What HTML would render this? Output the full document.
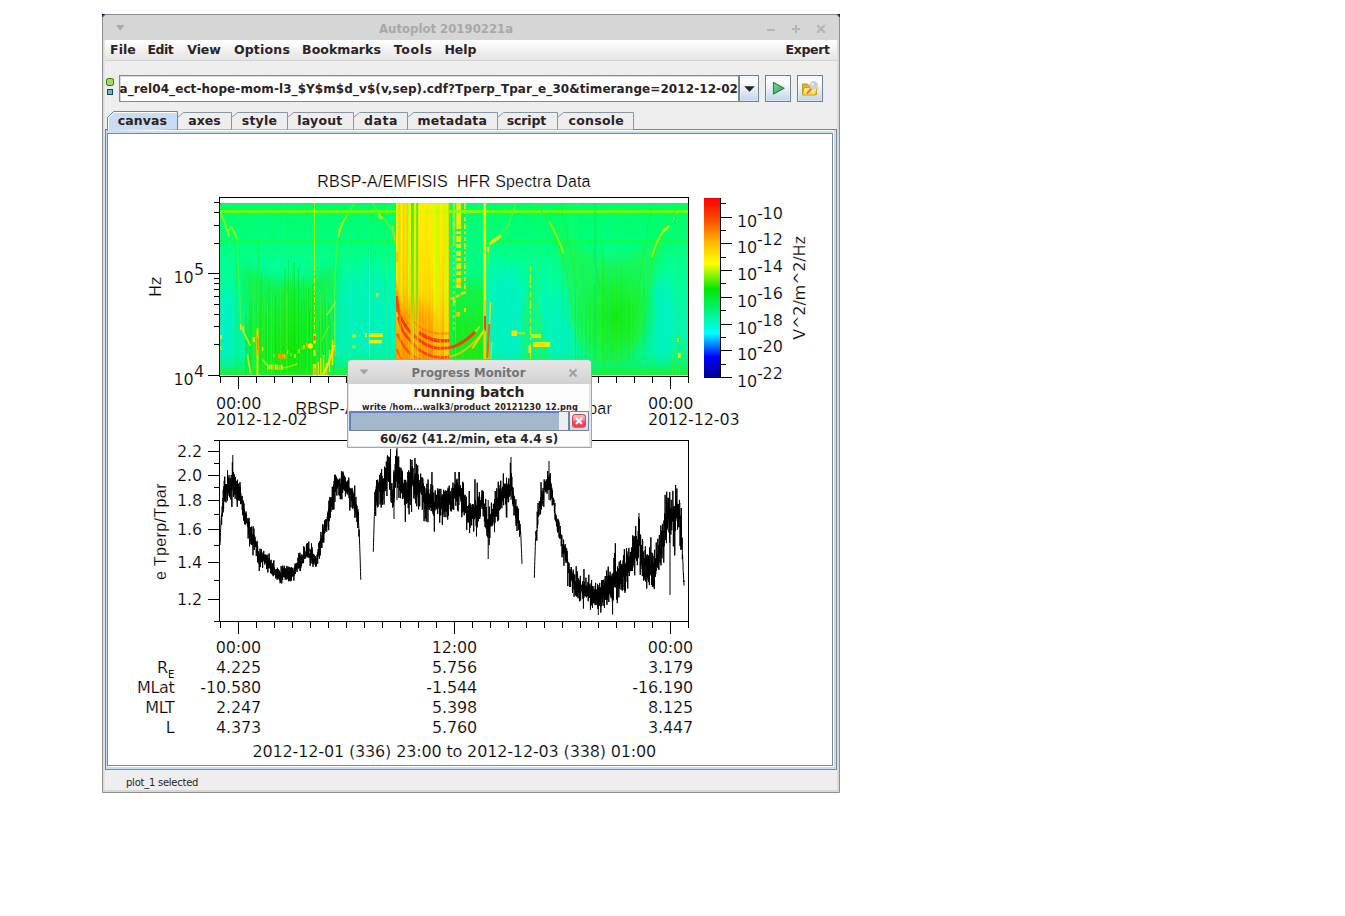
<!DOCTYPE html>
<html>
<head>
<meta charset="utf-8">
<title>Autoplot 20190221a</title>
<style>

html,body{margin:0;padding:0;background:#fff;}
body{width:1345px;height:916px;position:relative;overflow:hidden;font-family:"DejaVu Sans","Liberation Sans",sans-serif;}
.abs{position:absolute;}
.ui{position:absolute;font-weight:bold;font-size:12.5px;line-height:14px;color:#2b2226;white-space:nowrap;letter-spacing:0.15px;}
.btn{position:absolute;top:75px;height:27px;box-sizing:border-box;border:1px solid #6f8294;background:linear-gradient(#eef3f9,#ffffff 22%,#e4ecf5 55%,#c2d5ea);box-shadow:inset 0 0 0 1px rgba(255,255,255,0.3);}

</style>
</head>
<body>

<!-- window frame -->
<div class="abs" style="left:102px;top:14px;width:738px;height:779px;box-sizing:border-box;border:1px solid #8e8e8e;border-radius:5px 5px 0 0;background:#d6d6d6"></div>
<div class="abs" style="left:102px;top:14px;width:3px;height:3px;background:#0c1c3c;border-radius:0"></div>
<div class="abs" style="left:837px;top:14px;width:3px;height:3px;background:#0c1c3c"></div>
<div class="abs" style="left:102px;top:14px;width:738px;height:26px;box-sizing:border-box;border:1px solid #8e8e8e;border-bottom:none;border-radius:5px 5px 0 0;background:#d6d6d6"></div>
<svg class="abs" style="left:112px;top:20px" width="20" height="16"><path d="M4 5h8.500l-4.250 5.800z" fill="#ababab"/></svg>
<div class="abs" style="left:379px;top:21px;width:134px;text-align:center;font-family:'DejaVu Sans Condensed','DejaVu Sans',sans-serif;font-weight:bold;font-size:13px;line-height:16px;color:#a8a8a8;white-space:nowrap">Autoplot 20190221a</div>
<svg class="abs" style="left:760px;top:18px" width="76" height="20" stroke="#b6b6b6" stroke-width="2" fill="none"><path d="M7 12h8"/><path d="M32 11h8M36 7v8"/><path d="M57.200 7.200l7.600 7.600M64.800 7.200l-7.600 7.600" stroke-width="2.200"/></svg>
<!-- content bg -->
<div class="abs" style="left:105px;top:40px;width:732px;height:751px;background:#eeeeee"></div>
<div class="abs" style="left:103px;top:40px;width:2px;height:751px;background:linear-gradient(90deg,#d8d8d8,#e8e8e8)"></div>
<div class="abs" style="left:837px;top:40px;width:2px;height:751px;background:linear-gradient(90deg,#e0e0e0,#d4d4d4)"></div>
<div class="abs" style="left:103px;top:790px;width:736px;height:2px;background:#d8d8d8"></div>
<!-- menubar -->
<div class="abs" style="left:105px;top:40px;width:732px;height:20px;background:linear-gradient(#ffffff,#f6f6f6 35%,#e4e4e4)"></div>
<div class="abs" style="left:105px;top:60px;width:732px;height:1px;background:#d2d2d2"></div>
<span class="ui" style="left:110.1px;top:43px;letter-spacing:0.03px">File</span>
<span class="ui" style="left:147.6px;top:43px;letter-spacing:-0.57px">Edit</span>
<span class="ui" style="left:187.3px;top:43px;letter-spacing:-0.1px">View</span>
<span class="ui" style="left:233.9px;top:43px;letter-spacing:0.2px">Options</span>
<span class="ui" style="left:302.1px;top:43px;letter-spacing:0.05px">Bookmarks</span>
<span class="ui" style="left:393.8px;top:43px;letter-spacing:0.62px">Tools</span>
<span class="ui" style="left:444.4px;top:43px;letter-spacing:-0.07px">Help</span>
<span class="ui" style="left:785.6px;top:43px;letter-spacing:-0.34px">Expert</span>
<!-- url bar -->
<div class="abs" style="left:106px;top:78px;width:8.300px;height:8.300px;box-sizing:border-box;border:1.700px solid #3f7400;border-radius:2.200px;background:#a5d86c"></div>
<div class="abs" style="left:107px;top:88.800px;width:6.200px;height:6.200px;box-sizing:border-box;border:1px solid #0a4a6c;background:#7ab0d0"></div>
<div class="abs" style="left:119px;top:75px;width:620px;height:27px;box-sizing:border-box;border:1px solid #7a8a99;background:#fff;overflow:hidden;box-shadow:inset 1px 1px 0 #d4dae0"><span class="ui" style="right:0px;top:6px;font-size:12px;letter-spacing:0.08px">a_rel04_ect-hope-mom-l3_$Y$m$d_v$(v,sep).cdf?Tperp_Tpar_e_30&amp;timerange=2012-12-02</span></div>
<div class="btn" style="left:739px;width:20px"><svg width="18" height="25" style="display:block"><path d="M4.200 10.200h10.600l-5.300 5.600z" fill="#262626"/></svg></div>
<div class="btn" style="left:765px;width:26px"><svg width="24" height="25" style="display:block"><defs><linearGradient id="gpl" x1="0" y1="0" x2="1" y2="1"><stop offset="0" stop-color="#8fd69a"/><stop offset="1" stop-color="#2f9e55"/></linearGradient></defs><path d="M7.500 6.500v11.500l10.500-5.750z" fill="url(#gpl)" stroke="#1f8a4a" stroke-width="1.200" stroke-linejoin="round"/></svg></div>
<div class="btn" style="left:797px;width:26px"><svg width="24" height="25" style="display:block"><defs><linearGradient id="gfo" x1="0" y1="0" x2="0" y2="1"><stop offset="0" stop-color="#fff6b8"/><stop offset="1" stop-color="#ffd24a"/></linearGradient></defs><path d="M4.500 18.500v-10.500h5l1.500 1.500h7.500v9z" fill="#e0b030" stroke="#c89a18"/><path d="M4.500 19l1.800-7.500h13l-1.800 7.500z" fill="url(#gfo)" stroke="#d0a020"/><path d="M13.500 12.500l-4 4.500" stroke="#f07c1c" stroke-width="2" stroke-linecap="round"/><circle cx="15.700" cy="9.200" r="3.600" fill="#b4d6f8" stroke="#e6ccb8" stroke-width="1.200"/><circle cx="14.800" cy="8.300" r="1.300" fill="#e4f1fd"/></svg></div>
<!-- tab pane -->
<div class="abs" style="left:105px;top:129px;width:732px;height:641px;box-sizing:border-box;background:#c8ddf2;border:1px solid #7a8a99;border-top-color:#6382bf;border-left-color:#6382bf"></div>
<div class="abs" style="left:107px;top:130px;width:727px;height:1px;background:#fff"></div>
<div class="abs" style="left:833px;top:130px;width:1px;height:637px;background:#fff"></div>
<div class="abs" style="left:108px;top:766px;width:726px;height:1px;background:#fff"></div>
<div class="abs" style="left:107px;top:133px;width:726px;height:633px;box-sizing:border-box;background:#fff;border:1px solid #7a8a99"></div>
<svg class="abs" style="left:0;top:0" width="1345" height="140"><path d="M177.5 129.500V117.500L183.5 112.500H231.5V129.500" fill="#eeeeee" stroke="#8a95a3" stroke-width="1"/><path d="M231.5 129.500V117.500L237.5 112.500H287.5V129.500" fill="#eeeeee" stroke="#8a95a3" stroke-width="1"/><path d="M287.5 129.500V117.500L293.5 112.500H353.5V129.500" fill="#eeeeee" stroke="#8a95a3" stroke-width="1"/><path d="M353.5 129.500V117.500L359.5 112.500H407.5V129.500" fill="#eeeeee" stroke="#8a95a3" stroke-width="1"/><path d="M407.5 129.500V117.500L413.5 112.500H497.5V129.500" fill="#eeeeee" stroke="#8a95a3" stroke-width="1"/><path d="M497.5 129.500V117.500L503.5 112.500H557.5V129.500" fill="#eeeeee" stroke="#8a95a3" stroke-width="1"/><path d="M557.5 129.500V117.500L563.5 112.500H633.5V129.500" fill="#eeeeee" stroke="#8a95a3" stroke-width="1"/><path d="M107.5 131V117.500L113.5 111.500H177.5V129.500" fill="#c8ddf2" stroke="#6382bf" stroke-width="1"/><path d="M108.5 131V118L114 112.500H176.5" fill="none" stroke="#ffffff" stroke-width="1"/></svg>
<div class="ui" style="left:117.8px;top:114px;letter-spacing:0.1px">canvas</div>
<div class="ui" style="left:188.2px;top:114px;letter-spacing:0.07px">axes</div>
<div class="ui" style="left:241.7px;top:114px;letter-spacing:0.25px">style</div>
<div class="ui" style="left:297.3px;top:114px;letter-spacing:0.2px">layout</div>
<div class="ui" style="left:364px;top:114px;letter-spacing:0.53px">data</div>
<div class="ui" style="left:417.5px;top:114px;letter-spacing:0.26px">metadata</div>
<div class="ui" style="left:506.7px;top:114px;letter-spacing:-0.14px">script</div>
<div class="ui" style="left:568.6px;top:114px;letter-spacing:0.25px">console</div>
<!-- status -->
<div class="abs" style="left:126px;top:776px;font-size:10px;line-height:14px;color:#2b2226;white-space:nowrap;letter-spacing:-0.25px">plot_1 selected</div>

<svg class="abs" style="left:0;top:0" width="1345" height="916">
<defs>
<clipPath id="cs"><rect x="220" y="203" width="468" height="172"/></clipPath>
<clipPath id="cb"><rect x="396" y="203" width="90.500" height="172"/></clipPath>
<clipPath id="cbl"><rect x="396" y="203" width="53.300" height="172"/></clipPath>
<clipPath id="cbr"><rect x="449.300" y="203" width="37" height="172"/></clipPath>
<linearGradient id="gbase" x1="0" y1="203" x2="0" y2="375" gradientUnits="userSpaceOnUse"><stop offset="0" stop-color="#00ff62"/><stop offset="0.2" stop-color="#00ff7c"/><stop offset="0.35" stop-color="#00ff94"/><stop offset="0.55" stop-color="#00fca8"/><stop offset="0.75" stop-color="#00f8b2"/><stop offset="0.88" stop-color="#00f6ac"/><stop offset="0.94" stop-color="#08f484"/><stop offset="1" stop-color="#10f060"/></linearGradient>
<linearGradient id="gY" x1="0" y1="203" x2="0" y2="375" gradientUnits="userSpaceOnUse"><stop offset="0" stop-color="#f6f000"/><stop offset="0.25" stop-color="#ffe800"/><stop offset="0.5" stop-color="#ffd800"/><stop offset="0.7" stop-color="#ffbc00"/><stop offset="0.9" stop-color="#ff9c00"/><stop offset="1" stop-color="#ff9000"/></linearGradient>
<linearGradient id="gO" x1="0" y1="203" x2="0" y2="375" gradientUnits="userSpaceOnUse"><stop offset="0" stop-color="#ffd400"/><stop offset="0.4" stop-color="#ffc400"/><stop offset="0.65" stop-color="#ffa000"/><stop offset="0.9" stop-color="#ff7800"/><stop offset="1" stop-color="#ff7000"/></linearGradient>
<linearGradient id="gYG" x1="0" y1="203" x2="0" y2="375" gradientUnits="userSpaceOnUse"><stop offset="0" stop-color="#c4ff00"/><stop offset="0.5" stop-color="#d8f800"/><stop offset="0.75" stop-color="#f4d800"/><stop offset="1" stop-color="#ffb000"/></linearGradient>
<linearGradient id="gG" x1="0" y1="203" x2="0" y2="375" gradientUnits="userSpaceOnUse"><stop offset="0" stop-color="#38f000"/><stop offset="0.5" stop-color="#58f000"/><stop offset="0.75" stop-color="#c0e800"/><stop offset="1" stop-color="#f0c000"/></linearGradient>
<linearGradient id="gGR" x1="0" y1="203" x2="0" y2="375" gradientUnits="userSpaceOnUse"><stop offset="0" stop-color="#00ff74"/><stop offset="0.4" stop-color="#00fc84"/><stop offset="0.52" stop-color="#10f448"/><stop offset="0.75" stop-color="#18ec20"/><stop offset="1" stop-color="#20e810"/></linearGradient>
<radialGradient id="rgU1" cx="0.5" cy="0.62" r="0.62"><stop offset="0" stop-color="#10e404" stop-opacity="0.95"/><stop offset="0.55" stop-color="#18ec14" stop-opacity="0.7"/><stop offset="1" stop-color="#10f020" stop-opacity="0"/></radialGradient>
<radialGradient id="rgU2" cx="0.5" cy="0.5" r="0.5"><stop offset="0" stop-color="#14ea0c" stop-opacity="0.95"/><stop offset="0.5" stop-color="#1cf020" stop-opacity="0.7"/><stop offset="1" stop-color="#10f440" stop-opacity="0"/></radialGradient>
<filter id="b5" x="-30%" y="-30%" width="160%" height="160%"><feGaussianBlur stdDeviation="6"/></filter>
<filter id="b3" x="-30%" y="-30%" width="160%" height="160%"><feGaussianBlur stdDeviation="3"/></filter>
<filter id="b1" x="-30%" y="-30%" width="160%" height="160%"><feGaussianBlur stdDeviation="0.7"/></filter>
</defs>
<g clip-path="url(#cs)">
<rect x="220" y="203" width="468" height="172" fill="url(#gbase)"/>
<ellipse cx="228" cy="330" rx="12" ry="40" fill="#00f0cc" opacity="0.7" filter="url(#b5)"/>
<ellipse cx="345" cy="320" rx="9" ry="48" fill="#00f0cc" opacity="0.6" filter="url(#b5)"/>
<ellipse cx="366" cy="310" rx="24" ry="44" fill="#00f0cc" opacity="0.45" filter="url(#b5)"/>
<ellipse cx="388" cy="320" rx="8" ry="48" fill="#00f0cc" opacity="0.55" filter="url(#b5)"/>
<ellipse cx="508" cy="318" rx="20" ry="52" fill="#00f0cc" opacity="0.7" filter="url(#b5)"/>
<ellipse cx="545" cy="325" rx="10" ry="40" fill="#00f0cc" opacity="0.3" filter="url(#b5)"/>
<ellipse cx="561" cy="332" rx="10" ry="40" fill="#00f0cc" opacity="0.55" filter="url(#b5)"/>
<ellipse cx="662" cy="322" rx="12" ry="45" fill="#00f0cc" opacity="0.6" filter="url(#b5)"/>
<ellipse cx="495" cy="290" rx="8" ry="40" fill="#00f0cc" opacity="0.35" filter="url(#b5)"/>
<ellipse cx="655" cy="300" rx="6" ry="30" fill="#00f0cc" opacity="0.3" filter="url(#b5)"/>
<path d="M241 262 L243 330 Q248 374 290 378 Q330 374 335 318 L337 262 Q290 300 241 262Z" fill="#18f038" opacity="0.75" filter="url(#b5)"/>
<ellipse cx="289" cy="338" rx="44" ry="58" fill="url(#rgU1)"/>
<path d="M548 215 Q566 260 572 310 Q580 356 605 364 Q634 358 646 310 Q654 262 672 222 Q610 300 548 215Z" fill="#20f440" opacity="0.7" filter="url(#b5)"/>
<ellipse cx="616" cy="318" rx="44" ry="58" fill="url(#rgU2)"/>
<rect x="220" y="203" width="1" height="172" fill="#00ff40" opacity="0.1"/>
<rect x="222" y="203" width="1" height="172" fill="#00ffb0" opacity="0.05"/>
<rect x="223" y="203" width="1" height="172" fill="#00f0d0" opacity="0.1"/>
<rect x="225" y="258" width="1" height="117" fill="#00ffb0" opacity="0.06"/>
<rect x="231" y="248" width="1" height="127" fill="#00ff40" opacity="0.08"/>
<rect x="232" y="203" width="1" height="172" fill="#40ff40" opacity="0.12"/>
<rect x="233" y="203" width="1" height="172" fill="#00ffb0" opacity="0.13"/>
<rect x="235" y="293" width="1" height="82" fill="#20f020" opacity="0.13"/>
<rect x="241" y="203" width="1" height="172" fill="#00ff40" opacity="0.14"/>
<rect x="246" y="203" width="1" height="172" fill="#20f020" opacity="0.06"/>
<rect x="248" y="203" width="1" height="172" fill="#00f0d0" opacity="0.1"/>
<rect x="252" y="203" width="1" height="172" fill="#40ff40" opacity="0.12"/>
<rect x="253" y="290" width="1" height="85" fill="#20f020" opacity="0.17"/>
<rect x="255" y="203" width="1" height="172" fill="#40ff40" opacity="0.13"/>
<rect x="256" y="203" width="1" height="172" fill="#00f0d0" opacity="0.16"/>
<rect x="261" y="203" width="1" height="172" fill="#40ff40" opacity="0.06"/>
<rect x="264" y="203" width="1" height="172" fill="#00f0d0" opacity="0.1"/>
<rect x="267" y="203" width="1" height="172" fill="#00f0d0" opacity="0.18"/>
<rect x="269" y="203" width="1" height="172" fill="#00ff40" opacity="0.06"/>
<rect x="270" y="203" width="1" height="172" fill="#00ffb0" opacity="0.07"/>
<rect x="271" y="203" width="1" height="172" fill="#00ffb0" opacity="0.09"/>
<rect x="277" y="203" width="1" height="172" fill="#00ffb0" opacity="0.09"/>
<rect x="278" y="203" width="1" height="172" fill="#00f0d0" opacity="0.05"/>
<rect x="280" y="230" width="1" height="145" fill="#00ffb0" opacity="0.05"/>
<rect x="281" y="203" width="1" height="172" fill="#20f020" opacity="0.17"/>
<rect x="282" y="249" width="1" height="126" fill="#00ff40" opacity="0.13"/>
<rect x="283" y="203" width="1" height="172" fill="#40ff40" opacity="0.12"/>
<rect x="284" y="203" width="1" height="172" fill="#00f0d0" opacity="0.18"/>
<rect x="286" y="203" width="1" height="172" fill="#20f020" opacity="0.14"/>
<rect x="288" y="203" width="1" height="172" fill="#20f020" opacity="0.07"/>
<rect x="289" y="203" width="1" height="172" fill="#00ffb0" opacity="0.17"/>
<rect x="293" y="203" width="1" height="172" fill="#40ff40" opacity="0.17"/>
<rect x="296" y="203" width="1" height="172" fill="#00ff40" opacity="0.13"/>
<rect x="299" y="203" width="1" height="172" fill="#00ffb0" opacity="0.11"/>
<rect x="302" y="287" width="1" height="88" fill="#00ffb0" opacity="0.17"/>
<rect x="306" y="203" width="1" height="172" fill="#00ff40" opacity="0.11"/>
<rect x="310" y="240" width="1" height="135" fill="#40ff40" opacity="0.15"/>
<rect x="311" y="203" width="1" height="172" fill="#00f0d0" opacity="0.15"/>
<rect x="315" y="240" width="1" height="135" fill="#00f0d0" opacity="0.1"/>
<rect x="316" y="203" width="1" height="172" fill="#00ff40" opacity="0.04"/>
<rect x="318" y="203" width="1" height="172" fill="#00ffb0" opacity="0.18"/>
<rect x="319" y="231" width="1" height="144" fill="#00ffb0" opacity="0.06"/>
<rect x="326" y="203" width="1" height="172" fill="#40ff40" opacity="0.07"/>
<rect x="328" y="203" width="1" height="172" fill="#00ffb0" opacity="0.1"/>
<rect x="339" y="203" width="1" height="172" fill="#00f0d0" opacity="0.15"/>
<rect x="341" y="245" width="1" height="130" fill="#00ff40" opacity="0.11"/>
<rect x="342" y="203" width="1" height="172" fill="#00ffb0" opacity="0.11"/>
<rect x="344" y="242" width="1" height="133" fill="#00ff40" opacity="0.08"/>
<rect x="346" y="308" width="1" height="67" fill="#20f020" opacity="0.1"/>
<rect x="348" y="203" width="1" height="172" fill="#40ff40" opacity="0.1"/>
<rect x="350" y="263" width="1" height="112" fill="#00ffb0" opacity="0.16"/>
<rect x="352" y="203" width="1" height="172" fill="#00f0d0" opacity="0.06"/>
<rect x="354" y="257" width="1" height="118" fill="#00ff40" opacity="0.1"/>
<rect x="355" y="249" width="1" height="126" fill="#20f020" opacity="0.17"/>
<rect x="358" y="258" width="1" height="117" fill="#00ff40" opacity="0.18"/>
<rect x="364" y="203" width="1" height="172" fill="#00f0d0" opacity="0.18"/>
<rect x="367" y="203" width="1" height="172" fill="#40ff40" opacity="0.04"/>
<rect x="369" y="267" width="1" height="108" fill="#40ff40" opacity="0.11"/>
<rect x="371" y="203" width="1" height="172" fill="#00ff40" opacity="0.18"/>
<rect x="372" y="203" width="1" height="172" fill="#20f020" opacity="0.17"/>
<rect x="382" y="203" width="1" height="172" fill="#40ff40" opacity="0.05"/>
<rect x="384" y="203" width="1" height="172" fill="#20f020" opacity="0.13"/>
<rect x="386" y="203" width="1" height="172" fill="#40ff40" opacity="0.16"/>
<rect x="387" y="264" width="1" height="111" fill="#00ffb0" opacity="0.1"/>
<rect x="388" y="203" width="1" height="172" fill="#00ffb0" opacity="0.14"/>
<rect x="389" y="269" width="1" height="106" fill="#00ff40" opacity="0.07"/>
<rect x="390" y="294" width="1" height="81" fill="#00ff40" opacity="0.08"/>
<rect x="391" y="203" width="1" height="172" fill="#40ff40" opacity="0.15"/>
<rect x="392" y="254" width="1" height="121" fill="#00ffb0" opacity="0.12"/>
<rect x="395" y="203" width="1" height="172" fill="#00f0d0" opacity="0.13"/>
<rect x="397" y="203" width="1" height="172" fill="#00ff40" opacity="0.18"/>
<rect x="402" y="203" width="1" height="172" fill="#20f020" opacity="0.16"/>
<rect x="406" y="203" width="1" height="172" fill="#00f0d0" opacity="0.16"/>
<rect x="409" y="203" width="1" height="172" fill="#00ff40" opacity="0.06"/>
<rect x="410" y="203" width="1" height="172" fill="#40ff40" opacity="0.18"/>
<rect x="411" y="203" width="1" height="172" fill="#40ff40" opacity="0.07"/>
<rect x="412" y="294" width="1" height="81" fill="#20f020" opacity="0.11"/>
<rect x="413" y="203" width="1" height="172" fill="#00ffb0" opacity="0.15"/>
<rect x="415" y="203" width="1" height="172" fill="#00ffb0" opacity="0.05"/>
<rect x="416" y="203" width="1" height="172" fill="#00ff40" opacity="0.05"/>
<rect x="421" y="309" width="1" height="66" fill="#00f0d0" opacity="0.06"/>
<rect x="422" y="319" width="1" height="56" fill="#00ffb0" opacity="0.13"/>
<rect x="423" y="203" width="1" height="172" fill="#00ffb0" opacity="0.15"/>
<rect x="429" y="203" width="1" height="172" fill="#20f020" opacity="0.05"/>
<rect x="433" y="203" width="1" height="172" fill="#20f020" opacity="0.13"/>
<rect x="435" y="294" width="1" height="81" fill="#20f020" opacity="0.14"/>
<rect x="436" y="203" width="1" height="172" fill="#00ffb0" opacity="0.05"/>
<rect x="439" y="203" width="1" height="172" fill="#00ff40" opacity="0.07"/>
<rect x="447" y="313" width="1" height="62" fill="#00ff40" opacity="0.09"/>
<rect x="450" y="264" width="1" height="111" fill="#00f0d0" opacity="0.05"/>
<rect x="451" y="267" width="1" height="108" fill="#00ff40" opacity="0.13"/>
<rect x="455" y="203" width="1" height="172" fill="#00ffb0" opacity="0.07"/>
<rect x="456" y="203" width="1" height="172" fill="#00f0d0" opacity="0.05"/>
<rect x="461" y="203" width="1" height="172" fill="#20f020" opacity="0.06"/>
<rect x="463" y="244" width="1" height="131" fill="#00ffb0" opacity="0.08"/>
<rect x="468" y="203" width="1" height="172" fill="#00f0d0" opacity="0.14"/>
<rect x="472" y="203" width="1" height="172" fill="#40ff40" opacity="0.04"/>
<rect x="473" y="203" width="1" height="172" fill="#00ff40" opacity="0.14"/>
<rect x="480" y="236" width="1" height="139" fill="#20f020" opacity="0.08"/>
<rect x="481" y="203" width="1" height="172" fill="#00ff40" opacity="0.07"/>
<rect x="483" y="203" width="1" height="172" fill="#40ff40" opacity="0.15"/>
<rect x="490" y="247" width="1" height="128" fill="#00f0d0" opacity="0.1"/>
<rect x="495" y="203" width="1" height="172" fill="#00f0d0" opacity="0.09"/>
<rect x="498" y="301" width="1" height="74" fill="#00ff40" opacity="0.08"/>
<rect x="500" y="203" width="1" height="172" fill="#00ff40" opacity="0.05"/>
<rect x="503" y="203" width="1" height="172" fill="#00f0d0" opacity="0.1"/>
<rect x="504" y="203" width="1" height="172" fill="#00ff40" opacity="0.09"/>
<rect x="505" y="203" width="1" height="172" fill="#40ff40" opacity="0.15"/>
<rect x="511" y="203" width="1" height="172" fill="#20f020" opacity="0.11"/>
<rect x="512" y="203" width="1" height="172" fill="#00ffb0" opacity="0.11"/>
<rect x="513" y="203" width="1" height="172" fill="#00ff40" opacity="0.09"/>
<rect x="515" y="284" width="1" height="91" fill="#20f020" opacity="0.06"/>
<rect x="520" y="203" width="1" height="172" fill="#00ffb0" opacity="0.16"/>
<rect x="522" y="203" width="1" height="172" fill="#00ff40" opacity="0.11"/>
<rect x="529" y="234" width="1" height="141" fill="#00ff40" opacity="0.07"/>
<rect x="536" y="203" width="1" height="172" fill="#40ff40" opacity="0.11"/>
<rect x="538" y="203" width="1" height="172" fill="#00ffb0" opacity="0.04"/>
<rect x="540" y="203" width="1" height="172" fill="#40ff40" opacity="0.13"/>
<rect x="543" y="203" width="1" height="172" fill="#00f0d0" opacity="0.14"/>
<rect x="544" y="203" width="1" height="172" fill="#00f0d0" opacity="0.16"/>
<rect x="545" y="203" width="1" height="172" fill="#00ff40" opacity="0.13"/>
<rect x="551" y="203" width="1" height="172" fill="#40ff40" opacity="0.14"/>
<rect x="552" y="203" width="1" height="172" fill="#00ff40" opacity="0.08"/>
<rect x="554" y="203" width="1" height="172" fill="#40ff40" opacity="0.06"/>
<rect x="559" y="203" width="1" height="172" fill="#00ffb0" opacity="0.06"/>
<rect x="560" y="236" width="1" height="139" fill="#00ffb0" opacity="0.06"/>
<rect x="561" y="270" width="1" height="105" fill="#00f0d0" opacity="0.1"/>
<rect x="562" y="203" width="1" height="172" fill="#20f020" opacity="0.17"/>
<rect x="563" y="203" width="1" height="172" fill="#00ffb0" opacity="0.14"/>
<rect x="567" y="203" width="1" height="172" fill="#00ff40" opacity="0.06"/>
<rect x="568" y="245" width="1" height="130" fill="#00f0d0" opacity="0.17"/>
<rect x="570" y="203" width="1" height="172" fill="#40ff40" opacity="0.15"/>
<rect x="571" y="203" width="1" height="172" fill="#00f0d0" opacity="0.07"/>
<rect x="572" y="203" width="1" height="172" fill="#40ff40" opacity="0.14"/>
<rect x="574" y="203" width="1" height="172" fill="#00f0d0" opacity="0.05"/>
<rect x="575" y="238" width="1" height="137" fill="#20f020" opacity="0.08"/>
<rect x="576" y="203" width="1" height="172" fill="#40ff40" opacity="0.09"/>
<rect x="577" y="203" width="1" height="172" fill="#40ff40" opacity="0.17"/>
<rect x="582" y="203" width="1" height="172" fill="#00ff40" opacity="0.06"/>
<rect x="586" y="268" width="1" height="107" fill="#00f0d0" opacity="0.07"/>
<rect x="589" y="203" width="1" height="172" fill="#40ff40" opacity="0.1"/>
<rect x="592" y="203" width="1" height="172" fill="#00f0d0" opacity="0.05"/>
<rect x="594" y="203" width="1" height="172" fill="#00f0d0" opacity="0.16"/>
<rect x="596" y="203" width="1" height="172" fill="#00f0d0" opacity="0.11"/>
<rect x="597" y="309" width="1" height="66" fill="#00ff40" opacity="0.1"/>
<rect x="598" y="203" width="1" height="172" fill="#00ffb0" opacity="0.16"/>
<rect x="600" y="203" width="1" height="172" fill="#40ff40" opacity="0.12"/>
<rect x="602" y="203" width="1" height="172" fill="#00ff40" opacity="0.07"/>
<rect x="603" y="203" width="1" height="172" fill="#00ffb0" opacity="0.07"/>
<rect x="604" y="259" width="1" height="116" fill="#00ff40" opacity="0.11"/>
<rect x="608" y="203" width="1" height="172" fill="#00f0d0" opacity="0.16"/>
<rect x="610" y="203" width="1" height="172" fill="#40ff40" opacity="0.07"/>
<rect x="613" y="203" width="1" height="172" fill="#20f020" opacity="0.09"/>
<rect x="617" y="203" width="1" height="172" fill="#00ffb0" opacity="0.14"/>
<rect x="618" y="203" width="1" height="172" fill="#40ff40" opacity="0.06"/>
<rect x="619" y="203" width="1" height="172" fill="#00ff40" opacity="0.15"/>
<rect x="621" y="203" width="1" height="172" fill="#40ff40" opacity="0.05"/>
<rect x="623" y="314" width="1" height="61" fill="#20f020" opacity="0.15"/>
<rect x="624" y="203" width="1" height="172" fill="#00ffb0" opacity="0.05"/>
<rect x="627" y="203" width="1" height="172" fill="#40ff40" opacity="0.1"/>
<rect x="631" y="280" width="1" height="95" fill="#40ff40" opacity="0.13"/>
<rect x="635" y="281" width="1" height="94" fill="#20f020" opacity="0.15"/>
<rect x="638" y="248" width="1" height="127" fill="#20f020" opacity="0.05"/>
<rect x="644" y="203" width="1" height="172" fill="#40ff40" opacity="0.08"/>
<rect x="646" y="203" width="1" height="172" fill="#00f0d0" opacity="0.15"/>
<rect x="647" y="203" width="1" height="172" fill="#20f020" opacity="0.18"/>
<rect x="648" y="309" width="1" height="66" fill="#00f0d0" opacity="0.05"/>
<rect x="650" y="203" width="1" height="172" fill="#00ff40" opacity="0.13"/>
<rect x="652" y="203" width="1" height="172" fill="#00ff40" opacity="0.05"/>
<rect x="654" y="203" width="1" height="172" fill="#00ff40" opacity="0.18"/>
<rect x="659" y="300" width="1" height="75" fill="#00f0d0" opacity="0.12"/>
<rect x="662" y="203" width="1" height="172" fill="#00ff40" opacity="0.1"/>
<rect x="665" y="203" width="1" height="172" fill="#00ffb0" opacity="0.18"/>
<rect x="672" y="203" width="1" height="172" fill="#40ff40" opacity="0.1"/>
<rect x="675" y="270" width="1" height="105" fill="#00ff40" opacity="0.05"/>
<rect x="677" y="203" width="1" height="172" fill="#00ffb0" opacity="0.17"/>
<rect x="678" y="203" width="1" height="172" fill="#20f020" opacity="0.18"/>
<rect x="679" y="251" width="1" height="124" fill="#00f0d0" opacity="0.08"/>
<rect x="682" y="203" width="1" height="172" fill="#40ff40" opacity="0.13"/>
<rect x="683" y="203" width="1" height="172" fill="#00ffb0" opacity="0.08"/>
<rect x="684" y="263" width="1" height="112" fill="#00f0d0" opacity="0.07"/>
<rect x="686" y="203" width="1" height="172" fill="#20f020" opacity="0.07"/>
<rect x="243" y="308" width="1" height="67" fill="#60f020" opacity="0.21"/>
<rect x="245" y="315" width="1" height="60" fill="#00e820" opacity="0.49"/>
<rect x="246" y="314" width="1" height="61" fill="#00d800" opacity="0.24"/>
<rect x="247" y="329" width="1" height="46" fill="#00e820" opacity="0.24"/>
<rect x="249" y="302" width="1" height="73" fill="#00d800" opacity="0.30"/>
<rect x="250" y="320" width="1" height="55" fill="#00d800" opacity="0.25"/>
<rect x="251" y="297" width="1" height="78" fill="#00e820" opacity="0.41"/>
<rect x="253" y="294" width="1" height="81" fill="#60f020" opacity="0.30"/>
<rect x="254" y="281" width="1" height="94" fill="#60f020" opacity="0.23"/>
<rect x="256" y="277" width="1" height="98" fill="#00e820" opacity="0.26"/>
<rect x="257" y="302" width="1" height="73" fill="#60f020" opacity="0.35"/>
<rect x="258" y="285" width="1" height="90" fill="#60f020" opacity="0.21"/>
<rect x="259" y="314" width="1" height="61" fill="#20e000" opacity="0.31"/>
<rect x="260" y="280" width="1" height="95" fill="#00e820" opacity="0.29"/>
<rect x="261" y="272" width="1" height="103" fill="#00e820" opacity="0.36"/>
<rect x="262" y="301" width="1" height="74" fill="#60f020" opacity="0.24"/>
<rect x="264" y="296" width="1" height="79" fill="#60f020" opacity="0.21"/>
<rect x="265" y="314" width="1" height="61" fill="#00d800" opacity="0.15"/>
<rect x="266" y="315" width="1" height="60" fill="#20e000" opacity="0.29"/>
<rect x="267" y="300" width="1" height="75" fill="#60f020" opacity="0.43"/>
<rect x="268" y="282" width="1" height="93" fill="#00e820" opacity="0.37"/>
<rect x="271" y="292" width="1" height="83" fill="#60f020" opacity="0.45"/>
<rect x="273" y="301" width="1" height="74" fill="#60f020" opacity="0.21"/>
<rect x="275" y="295" width="1" height="80" fill="#00d800" opacity="0.27"/>
<rect x="280" y="289" width="1" height="86" fill="#60f020" opacity="0.39"/>
<rect x="283" y="307" width="1" height="68" fill="#20e000" opacity="0.18"/>
<rect x="284" y="269" width="1" height="106" fill="#20e000" opacity="0.44"/>
<rect x="285" y="268" width="1" height="107" fill="#00e820" opacity="0.22"/>
<rect x="286" y="290" width="1" height="85" fill="#60f020" opacity="0.47"/>
<rect x="287" y="295" width="1" height="80" fill="#60f020" opacity="0.32"/>
<rect x="288" y="260" width="1" height="115" fill="#00d800" opacity="0.30"/>
<rect x="290" y="275" width="1" height="100" fill="#20e000" opacity="0.29"/>
<rect x="291" y="288" width="1" height="87" fill="#20e000" opacity="0.20"/>
<rect x="292" y="265" width="1" height="110" fill="#20e000" opacity="0.27"/>
<rect x="293" y="262" width="1" height="113" fill="#00d800" opacity="0.20"/>
<rect x="294" y="262" width="1" height="113" fill="#00d800" opacity="0.41"/>
<rect x="295" y="290" width="1" height="85" fill="#00e820" opacity="0.22"/>
<rect x="297" y="294" width="1" height="81" fill="#60f020" opacity="0.19"/>
<rect x="298" y="267" width="1" height="108" fill="#00d800" opacity="0.48"/>
<rect x="301" y="299" width="1" height="76" fill="#00e820" opacity="0.32"/>
<rect x="302" y="302" width="1" height="73" fill="#20e000" opacity="0.25"/>
<rect x="303" y="275" width="1" height="100" fill="#00e820" opacity="0.24"/>
<rect x="304" y="299" width="1" height="76" fill="#00e820" opacity="0.47"/>
<rect x="306" y="287" width="1" height="88" fill="#00e820" opacity="0.37"/>
<rect x="307" y="285" width="1" height="90" fill="#60f020" opacity="0.33"/>
<rect x="308" y="288" width="1" height="87" fill="#00d800" opacity="0.34"/>
<rect x="309" y="308" width="1" height="67" fill="#00d800" opacity="0.35"/>
<rect x="310" y="287" width="1" height="88" fill="#20e000" opacity="0.25"/>
<rect x="312" y="284" width="1" height="91" fill="#00d800" opacity="0.32"/>
<rect x="314" y="293" width="1" height="82" fill="#00e820" opacity="0.49"/>
<rect x="315" y="298" width="1" height="77" fill="#20e000" opacity="0.25"/>
<rect x="316" y="305" width="1" height="70" fill="#60f020" opacity="0.21"/>
<rect x="319" y="321" width="1" height="54" fill="#00d800" opacity="0.37"/>
<rect x="320" y="293" width="1" height="82" fill="#60f020" opacity="0.46"/>
<rect x="322" y="307" width="1" height="68" fill="#00e820" opacity="0.22"/>
<rect x="323" y="321" width="1" height="54" fill="#20e000" opacity="0.28"/>
<rect x="325" y="300" width="1" height="75" fill="#00d800" opacity="0.27"/>
<rect x="326" y="286" width="1" height="89" fill="#60f020" opacity="0.38"/>
<rect x="328" y="302" width="1" height="73" fill="#00e820" opacity="0.35"/>
<rect x="329" y="305" width="1" height="70" fill="#20e000" opacity="0.33"/>
<rect x="330" y="320" width="1" height="55" fill="#20e000" opacity="0.40"/>
<rect x="333" y="304" width="1" height="71" fill="#20e000" opacity="0.26"/>
<rect x="334" y="336" width="1" height="39" fill="#00d800" opacity="0.21"/>
<rect x="575" y="290" width="1" height="70" fill="#00dc00" opacity="0.26"/>
<rect x="578" y="309" width="1" height="51" fill="#00dc00" opacity="0.16"/>
<rect x="581" y="314" width="1" height="46" fill="#20e400" opacity="0.24"/>
<rect x="585" y="295" width="1" height="65" fill="#20e400" opacity="0.10"/>
<rect x="586" y="306" width="1" height="54" fill="#00e820" opacity="0.21"/>
<rect x="589" y="296" width="1" height="64" fill="#00e820" opacity="0.24"/>
<rect x="594" y="285" width="1" height="75" fill="#00dc00" opacity="0.28"/>
<rect x="595" y="273" width="1" height="87" fill="#00e820" opacity="0.23"/>
<rect x="596" y="273" width="1" height="87" fill="#20e400" opacity="0.10"/>
<rect x="602" y="248" width="1" height="112" fill="#20e400" opacity="0.28"/>
<rect x="603" y="260" width="1" height="100" fill="#00dc00" opacity="0.13"/>
<rect x="607" y="274" width="1" height="86" fill="#00e820" opacity="0.14"/>
<rect x="609" y="285" width="1" height="75" fill="#20e400" opacity="0.20"/>
<rect x="612" y="279" width="1" height="81" fill="#20e400" opacity="0.20"/>
<rect x="617" y="265" width="1" height="95" fill="#00dc00" opacity="0.10"/>
<rect x="621" y="261" width="1" height="99" fill="#00dc00" opacity="0.16"/>
<rect x="628" y="299" width="1" height="61" fill="#00dc00" opacity="0.26"/>
<rect x="632" y="304" width="1" height="56" fill="#20e400" opacity="0.23"/>
<rect x="642" y="305" width="1" height="55" fill="#00e820" opacity="0.15"/>
<rect x="644" y="274" width="1" height="86" fill="#00e820" opacity="0.26"/>
<rect x="645" y="308" width="1" height="52" fill="#20e400" opacity="0.20"/>
<rect x="258" y="240" width="1" height="135" fill="#20f020" opacity="0.5"/>
<rect x="299" y="250" width="1" height="125" fill="#20f020" opacity="0.3"/>
<rect x="236" y="240" width="1" height="135" fill="#20f020" opacity="0.3"/>
<rect x="220" y="210" width="468" height="3" fill="#70ff00" opacity="0.9"/>
<rect x="220" y="211" width="468" height="1" fill="#a0ff00"/>
<rect x="220" y="240" width="468" height="3" fill="#10ff40" opacity="0.55"/>
<rect x="220" y="253" width="468" height="2" fill="#20ff50" opacity="0.3"/>
<rect x="220" y="356" width="468" height="1" fill="#20f020" opacity="0.2"/>
<rect x="220" y="359" width="468" height="1" fill="#20f020" opacity="0.18"/>
<rect x="220" y="362" width="468" height="1" fill="#20f020" opacity="0.28"/>
<rect x="220" y="365" width="468" height="1" fill="#20f020" opacity="0.22"/>
<rect x="220" y="368" width="468" height="1" fill="#20f020" opacity="0.35"/>
<rect x="220" y="370" width="468" height="1" fill="#20f020" opacity="0.4"/>
<rect x="220" y="372" width="468" height="1" fill="#20f020" opacity="0.5"/>
<rect x="220" y="373" width="468" height="1" fill="#20f020" opacity="0.5"/>
<rect x="220" y="374" width="468" height="1" fill="#20f020" opacity="0.6"/>
<rect x="220" y="375" width="468" height="1" fill="#20f020" opacity="0.6"/>
<path d="M221 214 L223 219 L225 223 L226 228 L228 232 L229 236" fill="none" stroke-linecap="round" stroke-linejoin="round" stroke="#a8fc00" stroke-width="1.800" opacity="0.8"/>
<path d="M229 230 L231 227 L233 230 L235 234 L236.500 238" fill="none" stroke-linecap="round" stroke-linejoin="round" stroke="#a8fc00" stroke-width="2" opacity="0.8"/>
<path d="M237 240 Q238 270 240 298 L240.500 324" fill="none" stroke-linecap="round" stroke-linejoin="round" stroke="#58fc20" stroke-width="1.300" opacity="0.6"/>
<path d="M334.500 300 Q335 262 338 238 Q342 222 350 210 L354 204" fill="none" stroke-linecap="round" stroke-linejoin="round" stroke="#58fc20" stroke-width="1.500" opacity="0.75"/>
<path d="M338.500 236 Q341 224 346 217" fill="none" stroke-linecap="round" stroke-linejoin="round" stroke="#a8fc00" stroke-width="2" opacity="0.85"/>
<rect x="338.500" y="228.500" width="2" height="3.500" fill="#e8f400"/>
<path d="M373 204 L377 211 L380 216 Q388 221 392 230 L395 242" fill="none" stroke-linecap="round" stroke-linejoin="round" stroke="#58fc20" stroke-width="1.500" opacity="0.8"/>
<rect x="378.500" y="214.500" width="2.500" height="4" fill="#d8f400"/><rect x="381" y="216.500" width="1.500" height="3" fill="#b8f800"/>
<path d="M392.500 226 L395 240" fill="none" stroke-linecap="round" stroke-linejoin="round" stroke="#ffc000" stroke-width="1.400" opacity="0.85"/>
<path d="M487.500 264 Q488.500 248 491 241 Q501 236 507 227.500 Q512 216 515.500 204" fill="none" stroke-linecap="round" stroke-linejoin="round" stroke="#58fc20" stroke-width="1.500" opacity="0.8"/>
<path d="M490.500 243 L500 236.500" fill="none" stroke-linecap="round" stroke-linejoin="round" stroke="#f0f000" stroke-width="3.400" opacity="0.9" stroke-dasharray="2.500 1"/>
<rect x="487" y="247" width="2" height="5" fill="#ffe000"/>
<path d="M536 204 Q548 218 556 236 Q566 262 571 300 Q576 346 592 358 Q606 366 622 358 Q638 348 645 306 Q650 262 659 240 Q668 222 679 204" fill="none" stroke-linecap="round" stroke-linejoin="round" stroke="#30f030" stroke-width="1.600" opacity="0.7"/>
<path d="M549 222 Q558 236 563 252" fill="none" stroke-linecap="round" stroke-linejoin="round" stroke="#a8fc00" stroke-width="1.800" opacity="0.8"/>
<path d="M652 256 Q657 240 665 228" fill="none" stroke-linecap="round" stroke-linejoin="round" stroke="#a8fc00" stroke-width="2" opacity="0.85"/>
<path d="M664 231 l4.500 -4.500" fill="none" stroke-linecap="round" stroke-linejoin="round" stroke="#f0e800" stroke-width="2.400" opacity="0.9"/><rect x="673" y="217" width="1.500" height="3" fill="#e8f000"/>
<path d="M560 204 Q574 260 580 310 Q586 348 606 352 Q628 348 636 310 Q642 258 652 204" fill="none" stroke-linecap="round" stroke-linejoin="round" stroke="#20ec20" stroke-width="1.300" opacity="0.35"/>
<path d="M595 203 V262 L600 290" fill="none" stroke-linecap="round" stroke-linejoin="round" stroke="#10ee28" stroke-width="2.200" opacity="0.5"/>
<path d="M537 204 Q546 214 551 228" fill="none" stroke-linecap="round" stroke-linejoin="round" stroke="#30f030" stroke-width="1.200" opacity="0.45"/>
<path d="M240.500 325 L244 333 L250 345" fill="none" stroke-linecap="round" stroke-linejoin="round" stroke="#d4f600" stroke-width="1.700" opacity="0.8"/>
<rect x="240" y="324" width="1.5" height="6" fill="#ffd800"/>
<rect x="252.5" y="337" width="2.5" height="5" fill="#f0e400"/>
<rect x="243" y="326" width="1.5" height="6" fill="#e8ec00" opacity="0.8"/>
<path d="M247.500 355 L250.500 373" fill="none" stroke-linecap="round" stroke-linejoin="round" stroke="#f0e000" stroke-width="1.600" opacity="0.9"/>
<rect x="256.5" y="328" width="2" height="48" fill="#e8f000" opacity="0.85"/>
<rect x="256.5" y="334" width="2.2" height="22" fill="#ffb000"/>
<rect x="257" y="338" width="1.4" height="12" fill="#ff8800"/>
<rect x="262" y="347" width="1.2" height="4" fill="#f0e800"/>
<rect x="267" y="364.5" width="1.6" height="5" fill="#f4ea00"/>
<rect x="269" y="364.5" width="1.6" height="5" fill="#ffd000"/>
<rect x="271" y="364.5" width="1.6" height="5" fill="#f4ea00"/>
<rect x="273" y="364.5" width="1.6" height="5" fill="#ffa800"/>
<rect x="275" y="364.5" width="1.6" height="5" fill="#f4ea00"/>
<rect x="277" y="365.0" width="1.6" height="5" fill="#ffc000"/>
<rect x="279" y="365.0" width="1.6" height="5" fill="#ffa800"/>
<rect x="281" y="365.0" width="1.6" height="5" fill="#f4ea00"/>
<path d="M283 368 Q290 367 297 364" fill="none" stroke-linecap="round" stroke-linejoin="round" stroke="#b0f400" stroke-width="1.600" opacity="0.7"/>
<path d="M263 360 L267 365" fill="none" stroke-linecap="round" stroke-linejoin="round" stroke="#c8f400" stroke-width="1.600" opacity="0.7"/>
<rect x="278" y="354" width="1.6" height="4.6" fill="#ffa800"/>
<rect x="280" y="354" width="1.6" height="4.6" fill="#ff9800"/>
<rect x="282" y="354" width="1.6" height="4.6" fill="#ffa800"/>
<rect x="284" y="354" width="1.6" height="4.6" fill="#ffb800"/>
<rect x="273.3" y="354" width="1.2" height="3.5" fill="#f4ea00"/>
<rect x="287" y="350" width="1.2" height="3.5" fill="#f4ea00"/>
<rect x="290.5" y="353" width="1" height="3" fill="#d8f000" opacity="0.8"/>
<rect x="294.3" y="354" width="1.3" height="4" fill="#f4ea00"/>
<rect x="298.3" y="349" width="1.3" height="4" fill="#f4ea00"/>
<rect x="301.2" y="346" width="1.3" height="4" fill="#ff9c00"/>
<rect x="303.3" y="345" width="1.3" height="4" fill="#f4ea00"/>
<rect x="306" y="342.5" width="1.3" height="4" fill="#ffb000"/>
<ellipse cx="310.300" cy="346" rx="2.600" ry="2.800" fill="#f8ee00"/>
<rect x="313.2" y="333.5" width="2.6" height="10" fill="#f0e800"/>
<rect x="313.5" y="336" width="2" height="4.5" fill="#ff5a00"/>
<path d="M314.500 203V266" stroke="#b4fc00" stroke-width="1" opacity="0.9"/>
<path d="M314.500 266V332" stroke="#e0f400" stroke-width="1" stroke-dasharray="5 1.500 3 2 6 2" opacity="0.95"/>
<rect x="313.3" y="350" width="2.2" height="6" fill="#f4e400"/>
<rect x="312.8" y="364" width="3.4" height="12" fill="#ffd000"/>
<rect x="313.5" y="368" width="2" height="8" fill="#ffa800"/>
<rect x="317.5" y="362" width="1.5" height="14" fill="#e8e800" opacity="0.92"/>
<rect x="320" y="358" width="1.5" height="18" fill="#d0f000" opacity="0.92"/>
<rect x="322.8" y="355" width="1.5" height="21" fill="#f8e000" opacity="0.92"/>
<rect x="325.8" y="363" width="1.5" height="13" fill="#ffd000" opacity="0.92"/>
<rect x="328.8" y="350" width="1.5" height="22" fill="#ffe000" opacity="0.92"/>
<rect x="331.8" y="340" width="1.5" height="25" fill="#f0e800" opacity="0.92"/>
<rect x="334.3" y="345" width="1.5" height="11" fill="#ffb000" opacity="0.92"/>
<rect x="334.3" y="300" width="1" height="45" fill="#b0f800" opacity="0.8"/>
<path d="M323 375 L329 362 L334 346" fill="none" stroke-linecap="round" stroke-linejoin="round" stroke="#ffe000" stroke-width="2.400" opacity="0.9"/>
<path d="M327 315 L335 303" fill="none" stroke-linecap="round" stroke-linejoin="round" stroke="#c0f800" stroke-width="1.400" opacity="0.7"/>
<path d="M322 340 L329 326" fill="none" stroke-linecap="round" stroke-linejoin="round" stroke="#a0f820" stroke-width="1.200" opacity="0.5"/>
<rect x="220" y="335" width="1.8" height="4" fill="#e0f000"/>
<rect x="220" y="346" width="1.6" height="4" fill="#d8f400" opacity="0.8"/>
<rect x="353" y="351" width="1" height="25" fill="#30f030" opacity="0.35"/>
<rect x="355" y="339" width="1" height="37" fill="#30f030" opacity="0.35"/>
<rect x="357" y="326" width="1" height="50" fill="#30f030" opacity="0.35"/>
<rect x="359" y="314" width="1" height="62" fill="#30f030" opacity="0.35"/>
<rect x="361" y="302" width="1" height="74" fill="#30f030" opacity="0.35"/>
<rect x="363" y="290" width="1" height="86" fill="#30f030" opacity="0.35"/>
<rect x="365" y="278" width="1" height="98" fill="#30f030" opacity="0.35"/>
<rect x="367" y="265" width="1" height="111" fill="#30f030" opacity="0.35"/>
<rect x="369" y="253" width="1" height="123" fill="#30f030" opacity="0.35"/>
<rect x="371" y="259" width="1" height="117" fill="#30f030" opacity="0.35"/>
<rect x="373" y="271" width="1" height="105" fill="#30f030" opacity="0.35"/>
<rect x="375" y="284" width="1" height="92" fill="#30f030" opacity="0.35"/>
<rect x="377" y="296" width="1" height="80" fill="#30f030" opacity="0.35"/>
<rect x="379" y="308" width="1" height="68" fill="#30f030" opacity="0.35"/>
<rect x="381" y="320" width="1" height="56" fill="#30f030" opacity="0.35"/>
<rect x="383" y="332" width="1" height="44" fill="#30f030" opacity="0.35"/>
<rect x="385" y="345" width="1" height="31" fill="#30f030" opacity="0.35"/>
<rect x="387" y="357" width="1" height="19" fill="#30f030" opacity="0.35"/>
<rect x="369" y="250" width="1" height="126" fill="#90f820" opacity="0.8"/>
<rect x="368.8" y="333" width="14" height="4" fill="#e4f000"/>
<rect x="371" y="333.5" width="9" height="2.5" fill="#ffdc00"/>
<rect x="368.8" y="340" width="13" height="3.4" fill="#dcf400"/>
<rect x="370" y="340.5" width="8" height="2.4" fill="#ffe400"/>
<rect x="365" y="333" width="2" height="4" fill="#f0e800"/>
<rect x="376" y="293" width="2.2" height="3.5" fill="#d8f400"/>
<ellipse cx="354" cy="336" rx="2" ry="2" fill="#c8f800" opacity="0.8"/><ellipse cx="354" cy="347" rx="2.200" ry="1.800" fill="#b0f820" opacity="0.7"/>
<rect x="522" y="313" width="1" height="63" fill="#30f030" opacity="0.35"/>
<rect x="524" y="303" width="1" height="73" fill="#30f030" opacity="0.35"/>
<rect x="526" y="293" width="1" height="83" fill="#30f030" opacity="0.35"/>
<rect x="528" y="283" width="1" height="93" fill="#30f030" opacity="0.35"/>
<rect x="530" y="273" width="1" height="103" fill="#30f030" opacity="0.35"/>
<rect x="532" y="273" width="1" height="103" fill="#30f030" opacity="0.35"/>
<rect x="534" y="283" width="1" height="93" fill="#30f030" opacity="0.35"/>
<rect x="536" y="293" width="1" height="83" fill="#30f030" opacity="0.35"/>
<rect x="538" y="303" width="1" height="73" fill="#30f030" opacity="0.35"/>
<rect x="540" y="313" width="1" height="63" fill="#30f030" opacity="0.35"/>
<rect x="542" y="323" width="1" height="53" fill="#30f030" opacity="0.35"/>
<rect x="544" y="333" width="1" height="43" fill="#30f030" opacity="0.35"/>
<rect x="546" y="343" width="1" height="33" fill="#30f030" opacity="0.35"/>
<rect x="548" y="353" width="1" height="23" fill="#30f030" opacity="0.35"/>
<rect x="550" y="363" width="1" height="13" fill="#30f030" opacity="0.35"/>
<path d="M530.500 266V376" stroke="#d0f400" stroke-width="1.200" stroke-dasharray="5 3 9 2 3 4" opacity="0.8"/>
<rect x="511.5" y="330.5" width="5.5" height="5.5" fill="#ffe000"/>
<rect x="517" y="332" width="8" height="2.5" fill="#a0f820" opacity="0.6"/>
<rect x="531" y="334" width="10" height="4" fill="#d0f400" opacity="0.9"/>
<rect x="533" y="342" width="17" height="5" fill="#e8ec00"/>
<rect x="536" y="343" width="8" height="3" fill="#ffd400"/>
<rect x="528.5" y="345" width="2.5" height="8" fill="#ffe000"/>
<rect x="676" y="336" width="1" height="40" fill="#40f020" opacity="0.5"/>
<rect x="679" y="330" width="1" height="46" fill="#40f020" opacity="0.6"/>
<rect x="682" y="340" width="1" height="36" fill="#40f020" opacity="0.5"/>
<rect x="672" y="350" width="1" height="26" fill="#40f020" opacity="0.4"/>
<rect x="685" y="300" width="1" height="76" fill="#40f020" opacity="0.3"/>
<rect x="678" y="353" width="2.6" height="5" fill="#e8f000"/>
<rect x="677" y="338" width="2" height="4" fill="#c0f800"/>
<path d="M487.500 372 L490.500 302" stroke="#ffe000" stroke-width="1.600" opacity="0.85" fill="none"/>
<path d="M487.300 358 L489.300 324" stroke="#ff5800" stroke-width="2.200" opacity="0.95" fill="none"/>
<path d="M489.500 376 L492 342" stroke="#e8f000" stroke-width="1.300" opacity="0.7" fill="none"/>
</g>
<g clip-path="url(#cb)">
<rect x="396" y="203" width="2.0" height="172" fill="url(#gY)"/>
<rect x="398" y="203" width="1.5" height="172" fill="url(#gYG)"/>
<rect x="399.5" y="203" width="3.5" height="172" fill="url(#gY)"/>
<rect x="403" y="203" width="4.6" height="172" fill="url(#gO)"/>
<rect x="407.6" y="203" width="1.4" height="172" fill="url(#gYG)"/>
<rect x="409" y="203" width="2.0" height="172" fill="url(#gY)"/>
<rect x="411" y="203" width="3.0" height="172" fill="url(#gG)"/>
<rect x="414" y="203" width="2.6" height="172" fill="url(#gY)"/>
<rect x="416.6" y="203" width="1.4" height="172" fill="url(#gG)"/>
<rect x="418" y="203" width="16.0" height="172" fill="url(#gY)"/>
<rect x="434" y="203" width="2.0" height="172" fill="url(#gYG)"/>
<rect x="436" y="203" width="4.0" height="172" fill="url(#gYG)"/>
<rect x="440" y="203" width="4.8" height="172" fill="url(#gY)"/>
<rect x="444.8" y="203" width="4.5" height="172" fill="url(#gYG)"/>
<rect x="397" y="203" width="1" height="172" fill="#ffe000" opacity="0.41"/>
<rect x="398" y="203" width="1" height="172" fill="#ffb000" opacity="0.42"/>
<rect x="400" y="203" width="1" height="172" fill="#ffe000" opacity="0.34"/>
<rect x="401" y="203" width="1" height="172" fill="#ffff00" opacity="0.21"/>
<rect x="402" y="203" width="1" height="172" fill="#ffe000" opacity="0.23"/>
<rect x="403" y="203" width="1" height="172" fill="#ffc000" opacity="0.41"/>
<rect x="404" y="203" width="1" height="172" fill="#fff000" opacity="0.25"/>
<rect x="405" y="203" width="1" height="172" fill="#fff000" opacity="0.39"/>
<rect x="406" y="203" width="1" height="172" fill="#e8ff00" opacity="0.33"/>
<rect x="412" y="203" width="1" height="172" fill="#e8ff00" opacity="0.21"/>
<rect x="413" y="203" width="1" height="172" fill="#fff000" opacity="0.35"/>
<rect x="414" y="203" width="1" height="172" fill="#ffff00" opacity="0.23"/>
<rect x="415" y="203" width="1" height="172" fill="#ffc000" opacity="0.29"/>
<rect x="417" y="203" width="1" height="172" fill="#ffc000" opacity="0.36"/>
<rect x="418" y="203" width="1" height="172" fill="#ffc000" opacity="0.31"/>
<rect x="420" y="203" width="1" height="172" fill="#ffe000" opacity="0.29"/>
<rect x="424" y="203" width="1" height="172" fill="#fff000" opacity="0.45"/>
<rect x="426" y="203" width="1" height="172" fill="#ffe000" opacity="0.34"/>
<rect x="427" y="203" width="1" height="172" fill="#ffb000" opacity="0.16"/>
<rect x="431" y="203" width="1" height="172" fill="#fff000" opacity="0.30"/>
<rect x="433" y="203" width="1" height="172" fill="#e8ff00" opacity="0.27"/>
<rect x="434" y="203" width="1" height="172" fill="#ffff00" opacity="0.41"/>
<rect x="435" y="203" width="1" height="172" fill="#fff000" opacity="0.38"/>
<rect x="438" y="203" width="1" height="172" fill="#ffe000" opacity="0.28"/>
<rect x="441" y="203" width="1" height="172" fill="#fff000" opacity="0.27"/>
<rect x="443" y="203" width="1" height="172" fill="#ffb000" opacity="0.25"/>
<rect x="444" y="203" width="1" height="172" fill="#fff000" opacity="0.39"/>
<rect x="445" y="203" width="1" height="172" fill="#ffe000" opacity="0.36"/>
<rect x="446" y="203" width="1" height="172" fill="#e8ff00" opacity="0.18"/>
<rect x="448" y="203" width="1" height="172" fill="#ffb000" opacity="0.42"/>
<ellipse cx="416" cy="340" rx="22" ry="38" fill="#ff8400" opacity="0.5" filter="url(#b5)"/>
<rect x="449.300" y="203" width="37" height="172" fill="url(#gGR)"/>
<rect x="450" y="203" width="1" height="172" fill="#30f040" opacity="0.5"/>
<rect x="452" y="203" width="1" height="172" fill="#00ff90" opacity="0.6"/>
<rect x="455" y="203" width="1" height="172" fill="#00ffb0" opacity="0.8"/>
<rect x="462" y="203" width="1" height="172" fill="#20f040" opacity="0.5"/>
<rect x="463" y="203" width="1" height="172" fill="#00f060" opacity="0.5"/>
<rect x="470" y="203" width="1" height="172" fill="#30f050" opacity="0.3"/>
<rect x="475" y="203" width="1" height="172" fill="#00f890" opacity="0.3"/>
<rect x="452.800" y="203" width="2" height="40" fill="#c8f800" opacity="0.85"/>
<path d="M453.800 243V330" stroke="#c8f400" stroke-width="2" stroke-dasharray="3 4 2 3" opacity="0.8"/>
<rect x="456.300" y="203" width="4.600" height="21" fill="#f8e800"/>
<path d="M458.600 224V290" stroke="#f0e400" stroke-width="4.600" stroke-dasharray="5 2 3 2 6 2 4 3"/>
<rect x="456.400" y="282" width="4.400" height="3" fill="#ffc000"/><rect x="456.400" y="312" width="3.600" height="4.500" fill="#ffc000"/><rect x="464" y="308" width="2" height="4" fill="#e8e800"/><rect x="453" y="300" width="2.500" height="3" fill="#f0e000"/>
<path d="M451 299 L458 296 L466 291.500" stroke="#ffc800" stroke-width="2.400" stroke-dasharray="4 1.500" fill="none"/>
<path d="M464.900 203V296" stroke="#e0f400" stroke-width="1.600" stroke-dasharray="6 2 3 3 4 2"/>
<rect x="483.600" y="203" width="2.600" height="172" fill="#f4f000"/>
<rect x="483.600" y="300" width="2.600" height="76" fill="#ffc000" opacity="0.8"/>
<rect x="484" y="316" width="2" height="15" fill="#ff4400"/>
<rect x="396" y="210" width="90" height="3" fill="#b0ff00" opacity="0.3"/>
<rect x="449.300" y="210" width="34" height="3" fill="#88ff00" opacity="0.85"/>
<g clip-path="url(#cbl)">
<path d="M396.4 284C396.7 285.7 397.4 291.0 398 294C398.6 297.0 398.8 298.8 400.2 302C401.6 305.2 403.9 309.7 406.2 313C408.5 316.3 411.4 319.4 413.8 321.7C416.2 324.0 418.0 325.4 420.4 327C422.8 328.6 425.1 330.3 428 331.5C430.9 332.7 434.4 333.8 437.9 334.2C441.4 334.6 447.0 333.8 448.8 333.7" fill="none" stroke="#ff9400" stroke-width="1.8" opacity="0.5" stroke-linecap="round"/>
<path d="M396.4 291C396.7 292.7 397.4 298.0 398 301C398.6 304.0 398.8 305.8 400.2 309C401.6 312.2 403.9 316.7 406.2 320C408.5 323.3 411.4 326.4 413.8 328.7C416.2 331.0 418.0 332.4 420.4 334C422.8 335.6 425.1 337.3 428 338.5C430.9 339.7 434.4 340.8 437.9 341.2C441.4 341.6 447.0 340.8 448.8 340.7" fill="none" stroke="#ff7c00" stroke-width="2" opacity="0.6" stroke-linecap="round"/>
<path d="M396.4 298C396.7 299.7 397.4 305.0 398 308C398.6 311.0 398.8 312.8 400.2 316C401.6 319.2 403.9 323.7 406.2 327C408.5 330.3 411.4 333.4 413.8 335.7C416.2 338.0 418.0 339.4 420.4 341C422.8 342.6 425.1 344.3 428 345.5C430.9 346.7 434.4 347.8 437.9 348.2C441.4 348.6 447.0 347.8 448.8 347.7" fill="none" stroke="#ff3400" stroke-width="3" opacity="0.95" stroke-linecap="round"/>
<path d="M420.4 333.5C421.7 334.2 425.4 336.8 428 337.9C430.6 339.0 433.4 339.7 435.7 340.2C438.0 340.7 439.7 340.8 442 340.8C444.3 340.9 448.2 340.6 449.5 340.5" fill="none" stroke="#ff3000" stroke-width="3.6" opacity="0.95" stroke-linecap="round"/>
<path d="M414 322C415.3 323.1 419.3 326.8 422 328.5C424.7 330.2 427.0 331.2 430 332C433.0 332.8 436.8 333.3 440 333.5C443.2 333.7 447.9 333.1 449.5 333" fill="none" stroke="#ff7000" stroke-width="2" opacity="0.6" stroke-linecap="round"/>
<path d="M398.5 318C399.2 320.2 400.9 327.5 402.9 331.3C404.9 335.1 407.9 337.9 410.6 341C413.3 344.1 416.2 347.5 419.3 349.9C422.4 352.3 425.6 354.0 429 355.3C432.4 356.6 436.6 357.2 440 357.5C443.4 357.8 447.9 357.1 449.5 357" fill="none" stroke="#ff3c00" stroke-width="2.8" opacity="0.9" stroke-linecap="round"/>
<path d="M397.5 334.6C398.6 336.6 401.8 343.4 404 346.6C406.2 349.8 407.9 351.8 410.6 354C413.3 356.2 416.4 358.3 420 360C423.6 361.7 430.0 363.3 432 364" fill="none" stroke="#ff4800" stroke-width="2.6" opacity="0.85" stroke-linecap="round"/>
<path d="M397 350C397.8 351.7 400.2 357.2 402 360C403.8 362.8 405.7 365.0 408 367C410.3 369.0 414.7 371.2 416 372" fill="none" stroke="#ff5000" stroke-width="2.4" opacity="0.8" stroke-linecap="round"/>
</g>
<g clip-path="url(#cbr)">
<path d="M437.9 348.2C439.7 348.1 445.5 348.2 448.8 347.7C452.1 347.2 454.6 346.4 457.5 345C460.4 343.6 463.6 341.5 466.3 339.5C469.1 337.5 472.7 334.1 474 333" fill="none" stroke="#ff3800" stroke-width="3" opacity="0.95" stroke-linecap="round"/>
<path d="M449 357C450.8 356.3 456.5 354.8 460 353C463.5 351.2 466.7 348.8 470 346C473.3 343.2 477.7 338.7 480 336C482.3 333.3 483.3 331.0 484 330" fill="none" stroke="#ffc400" stroke-width="2" opacity="0.75" stroke-linecap="round"/>
<path d="M472.8 347.7C473.7 346.4 476.4 342.6 478 340C479.6 337.4 481.8 333.7 482.6 332.4" fill="none" stroke="#f0e000" stroke-width="2" opacity="0.85" stroke-linecap="round"/>
<path d="M476 331C476.6 330.3 478.8 327.7 479.3 327" fill="none" stroke="#e8e400" stroke-width="1.8" opacity="0.8" stroke-linecap="round"/>
</g>
<rect x="396.3" y="296" width="1.8" height="16" fill="#ff4000"/>
<rect x="396.3" y="252" width="1.5" height="10" fill="#ffb000"/>
<rect x="399" y="203" width="1" height="172" fill="#ffd000" opacity="0.18"/>
<rect x="400" y="203" width="1" height="172" fill="#ffd000" opacity="0.33"/>
<rect x="410" y="203" width="1" height="172" fill="#fff000" opacity="0.34"/>
<rect x="412" y="203" width="1" height="172" fill="#fff000" opacity="0.20"/>
<rect x="413" y="203" width="1" height="172" fill="#ffe800" opacity="0.42"/>
<rect x="415" y="203" width="1" height="172" fill="#ffe800" opacity="0.39"/>
<rect x="417" y="203" width="1" height="172" fill="#ffd000" opacity="0.21"/>
<rect x="418" y="203" width="1" height="172" fill="#ffe800" opacity="0.28"/>
<rect x="421" y="203" width="1" height="172" fill="#fff000" opacity="0.31"/>
<rect x="427" y="203" width="1" height="172" fill="#fff000" opacity="0.27"/>
<rect x="433" y="203" width="1" height="172" fill="#fff000" opacity="0.29"/>
<rect x="437" y="203" width="1" height="172" fill="#fff000" opacity="0.19"/>
<rect x="439" y="203" width="1" height="172" fill="#ffe800" opacity="0.19"/>
<rect x="440" y="203" width="1" height="172" fill="#fff000" opacity="0.32"/>
<rect x="444" y="203" width="1" height="172" fill="#fff000" opacity="0.36"/>
<rect x="447" y="203" width="1" height="172" fill="#fff000" opacity="0.32"/>
<rect x="411" y="203" width="3.0" height="172" fill="url(#gG)" opacity="0.75"/>
<rect x="416.6" y="203" width="1.4" height="172" fill="url(#gG)" opacity="0.75"/>
</g>
<defs><linearGradient id="gcb" x1="0" y1="1" x2="0" y2="0"><stop offset="0.0000" stop-color="rgb(0,0,137)"/><stop offset="0.1176" stop-color="rgb(0,0,255)"/><stop offset="0.2471" stop-color="rgb(0,255,255)"/><stop offset="0.4941" stop-color="rgb(0,232,0)"/><stop offset="0.6353" stop-color="rgb(255,255,0)"/><stop offset="0.7529" stop-color="rgb(255,185,0)"/><stop offset="0.8667" stop-color="rgb(255,84,0)"/><stop offset="1.0000" stop-color="rgb(255,0,0)"/></linearGradient></defs><rect x="704" y="198" width="17" height="180" fill="url(#gcb)"/>
<path d="M220.00 545.3L220.13 542.1L220.25 541.9L220.38 536.3L220.50 532.5L220.63 528.8L220.75 527.5L220.88 523.2L221.00 521.1L221.13 519.4L221.25 517.2L221.38 516.1L221.50 515.0L221.63 524.9L221.75 513.7L221.88 514.9L222.00 515.8L222.13 507.2L222.25 506.1L222.38 516.3L222.50 508.5L222.63 508.6L222.75 504.0L222.88 503.0L223.00 497.8L223.13 512.4L223.25 489.8L223.38 500.1L223.50 508.8L223.63 508.9L223.75 498.0L223.88 486.5L224.00 499.1L224.13 498.6L224.25 480.6L224.38 493.5L224.50 484.3L224.63 487.7L224.75 476.6L224.88 501.3L225.00 490.8L225.13 496.0L225.25 501.5L225.38 498.2L225.50 484.6L225.63 484.1L225.75 491.2L225.88 488.7L226.00 502.4L226.13 493.2L226.25 488.4L226.38 487.3L226.50 492.2L226.63 484.0L226.75 486.2L226.88 487.9L227.00 492.4L227.13 494.8L227.25 498.6L227.38 500.7L227.50 470.4L227.63 485.4L227.75 486.4L227.88 495.2L228.00 490.9L228.13 479.0L228.25 489.6L228.38 483.0L228.50 478.0L228.63 483.3L228.75 479.7L228.88 492.7L229.00 475.1L229.13 481.1L229.25 496.1L229.38 483.4L229.50 490.8L229.63 497.2L229.75 481.9L229.88 489.6L230.00 481.3L230.13 478.4L230.25 491.0L230.38 481.4L230.50 489.4L230.63 478.2L230.75 496.6L230.88 499.5L231.00 487.4L231.13 479.1L231.25 475.0L231.38 488.6L231.50 489.1L231.63 481.0L231.75 480.2L231.88 507.0L232.00 480.0L232.13 479.9L232.25 478.9L232.38 462.2L232.50 485.6L232.63 480.6L232.75 475.6L232.88 480.4L233.00 487.0L233.13 484.7L233.25 471.9L233.38 496.8L233.50 478.9L233.63 473.8L233.75 480.2L233.88 487.8L234.00 480.2L234.13 488.8L234.26 474.3L234.38 479.4L234.51 477.1L234.63 488.9L234.76 494.9L234.88 491.2L235.01 476.9L235.13 498.7L235.26 491.4L235.38 478.7L235.51 477.3L235.63 486.0L235.76 488.5L235.88 483.0L236.01 494.1L236.13 481.0L236.26 487.4L236.38 481.9L236.51 482.4L236.63 488.5L236.76 487.2L236.88 499.8L237.01 484.0L237.13 500.9L237.26 506.7L237.38 479.7L237.51 491.5L237.63 498.9L237.76 498.4L237.88 487.8L238.01 496.0L238.13 484.0L238.26 500.4L238.38 491.8L238.51 499.8L238.63 491.4L238.76 492.4L238.88 483.5L239.01 488.4L239.13 499.3L239.26 490.4L239.38 496.2L239.51 500.2L239.63 500.7L239.76 486.8L239.88 499.1L240.01 482.2L240.13 489.7L240.26 495.3L240.38 487.7L240.51 492.4L240.63 504.1L240.76 493.0L240.88 501.2L241.01 497.2L241.13 501.3L241.26 503.0L241.38 499.2L241.51 500.6L241.63 496.3L241.76 504.2L241.88 501.7L242.01 498.7L242.13 495.9L242.26 510.1L242.38 504.1L242.51 514.3L242.63 512.5L242.76 505.0L242.88 513.0L243.01 515.5L243.13 500.5L243.26 506.3L243.38 509.4L243.51 520.6L243.63 511.3L243.76 517.1L243.88 509.6L244.01 503.4L244.13 515.3L244.26 514.8L244.38 518.6L244.51 509.2L244.63 524.0L244.76 516.6L244.88 524.0L245.01 513.0L245.13 524.8L245.26 515.0L245.38 512.9L245.51 513.4L245.63 513.5L245.76 514.5L245.88 522.7L246.01 511.5L246.13 523.6L246.26 514.0L246.38 519.8L246.51 514.7L246.63 521.5L246.76 523.0L246.88 521.8L247.01 522.0L247.13 518.1L247.26 518.9L247.38 525.3L247.51 526.6L247.63 526.7L247.76 522.4L247.88 527.5L248.01 529.4L248.13 538.5L248.26 528.9L248.39 523.5L248.51 519.3L248.64 533.7L248.76 533.5L248.89 527.9L249.01 517.8L249.14 522.7L249.26 527.3L249.39 521.9L249.51 546.4L249.64 537.9L249.76 532.8L249.89 534.8L250.01 531.1L250.14 527.8L250.26 531.0L250.39 529.7L250.51 536.6L250.64 527.3L250.76 534.4L250.89 543.6L251.01 531.1L251.14 527.5L251.26 544.5L251.39 538.1L251.51 544.7L251.64 526.6L251.76 533.9L251.89 533.7L252.01 537.2L252.14 534.8L252.26 544.9L252.39 541.5L252.51 534.5L252.64 542.5L252.76 539.1L252.89 539.4L253.01 555.3L253.14 526.3L253.26 530.8L253.39 541.0L253.51 544.6L253.64 545.4L253.76 545.0L253.89 528.5L254.01 537.7L254.14 542.1L254.26 550.0L254.39 535.4L254.51 547.2L254.64 538.3L254.76 536.4L254.89 546.7L255.01 537.4L255.14 543.3L255.26 541.2L255.39 546.6L255.51 547.1L255.64 544.4L255.76 543.1L255.89 546.0L256.01 547.1L256.14 542.0L256.26 555.9L256.39 549.5L256.51 554.4L256.64 556.1L256.76 550.7L256.89 555.5L257.01 554.3L257.14 540.9L257.26 555.6L257.39 548.1L257.51 562.3L257.64 545.8L257.76 556.5L257.89 560.3L258.01 553.4L258.14 553.7L258.26 556.2L258.39 551.2L258.51 553.9L258.64 557.5L258.76 560.7L258.89 552.9L259.01 563.9L259.14 558.2L259.26 570.9L259.39 554.7L259.51 555.0L259.64 556.9L259.76 558.2L259.89 556.2L260.01 548.7L260.14 555.1L260.26 564.3L260.39 567.1L260.51 553.3L260.64 561.3L260.76 559.0L260.89 551.4L261.01 559.4L261.14 562.4L261.26 549.0L261.39 550.6L261.51 556.6L261.64 556.1L261.76 553.5L261.89 562.1L262.01 560.7L262.14 557.7L262.27 554.8L262.39 558.2L262.52 556.9L262.64 567.8L262.77 556.1L262.89 558.2L263.02 552.5L263.14 561.3L263.27 556.7L263.39 558.5L263.52 559.0L263.64 553.3L263.77 550.9L263.89 557.2L264.02 560.2L264.14 557.9L264.27 554.6L264.39 557.7L264.52 562.2L264.64 562.1L264.77 564.5L264.89 564.3L265.02 561.2L265.14 558.5L265.27 554.8L265.39 562.6L265.52 557.6L265.64 562.6L265.77 559.4L265.89 554.6L266.02 558.0L266.14 555.2L266.27 557.1L266.39 565.5L266.52 562.9L266.64 557.6L266.77 569.1L266.89 562.4L267.02 568.4L267.14 564.1L267.27 563.7L267.39 565.7L267.52 567.2L267.64 561.8L267.77 554.7L267.89 572.5L268.02 558.0L268.14 564.8L268.27 564.5L268.39 560.1L268.52 567.0L268.64 567.6L268.77 566.2L268.89 568.4L269.02 568.2L269.14 553.5L269.27 565.0L269.39 565.2L269.52 558.2L269.64 561.2L269.77 565.8L269.89 562.9L270.02 568.0L270.14 567.2L270.27 560.6L270.39 569.1L270.52 562.1L270.64 566.9L270.77 572.8L270.89 570.7L271.02 569.7L271.14 559.8L271.27 573.7L271.39 567.6L271.52 567.2L271.64 570.9L271.77 568.3L271.89 566.7L272.02 568.1L272.14 563.9L272.27 570.1L272.39 574.6L272.52 566.9L272.64 563.2L272.77 573.4L272.89 573.9L273.02 565.7L273.14 576.2L273.27 570.4L273.39 573.6L273.52 561.5L273.64 570.0L273.77 561.2L273.89 560.3L274.02 575.2L274.14 567.3L274.27 571.8L274.39 569.3L274.52 568.7L274.64 574.2L274.77 572.5L274.89 571.1L275.02 571.7L275.14 569.3L275.27 569.9L275.39 572.3L275.52 571.0L275.64 570.8L275.77 578.4L275.89 574.6L276.02 575.9L276.14 573.7L276.27 573.2L276.40 569.1L276.52 575.7L276.65 572.8L276.77 577.7L276.90 572.5L277.02 570.7L277.15 579.8L277.27 573.4L277.40 567.8L277.52 568.8L277.65 577.2L277.77 577.5L277.90 574.3L278.02 578.0L278.15 571.0L278.27 570.7L278.40 571.8L278.52 569.0L278.65 570.8L278.77 575.3L278.90 579.3L279.02 575.6L279.15 570.5L279.27 574.3L279.40 574.1L279.52 580.3L279.65 575.7L279.77 571.5L279.90 576.6L280.02 575.3L280.15 583.2L280.27 577.6L280.40 573.3L280.52 582.0L280.65 574.9L280.77 575.9L280.90 573.5L281.02 573.8L281.15 566.0L281.27 574.3L281.40 578.7L281.52 578.2L281.65 575.7L281.77 583.4L281.90 573.3L282.02 572.4L282.15 569.1L282.27 567.3L282.40 569.3L282.52 568.1L282.65 579.8L282.77 565.6L282.90 573.2L283.02 574.6L283.15 577.0L283.27 577.1L283.40 575.9L283.52 569.9L283.65 570.1L283.77 568.0L283.90 574.3L284.02 575.9L284.15 572.8L284.27 565.8L284.40 572.1L284.52 568.0L284.65 577.3L284.77 576.4L284.90 575.9L285.02 573.5L285.15 579.5L285.27 579.0L285.40 578.5L285.52 568.9L285.65 568.4L285.77 577.8L285.90 573.3L286.02 573.7L286.15 578.0L286.27 579.7L286.40 576.4L286.52 577.0L286.65 575.2L286.77 576.0L286.90 565.8L287.02 574.0L287.15 568.3L287.27 572.4L287.40 572.8L287.52 575.0L287.65 573.9L287.77 579.2L287.90 571.8L288.02 570.4L288.15 566.7L288.27 575.8L288.40 575.8L288.52 573.4L288.65 576.6L288.77 581.3L288.90 571.0L289.02 580.9L289.15 566.9L289.27 571.3L289.40 576.4L289.52 578.4L289.65 573.1L289.77 571.8L289.90 580.0L290.02 571.4L290.15 573.5L290.27 579.1L290.40 567.7L290.53 574.8L290.65 571.0L290.78 581.3L290.90 568.5L291.03 580.6L291.15 570.3L291.28 579.6L291.40 567.0L291.53 574.8L291.65 571.8L291.78 575.3L291.90 573.0L292.03 573.2L292.15 573.1L292.28 576.7L292.40 568.5L292.53 571.6L292.65 569.9L292.78 571.8L292.90 567.8L293.03 572.9L293.15 573.1L293.28 573.7L293.40 572.1L293.53 575.0L293.65 574.9L293.78 573.6L293.90 580.5L294.03 571.2L294.15 570.7L294.28 573.9L294.40 568.5L294.53 575.7L294.65 566.9L294.78 569.6L294.90 569.9L295.03 563.7L295.15 570.9L295.28 574.0L295.40 573.0L295.53 566.3L295.65 570.3L295.78 563.7L295.90 567.5L296.03 566.1L296.15 568.5L296.28 567.4L296.40 569.8L296.53 568.0L296.65 568.0L296.78 566.9L296.90 563.1L297.03 572.0L297.15 562.7L297.28 564.7L297.40 563.4L297.53 565.5L297.65 565.5L297.78 567.3L297.90 568.2L298.03 557.6L298.15 567.9L298.28 558.2L298.40 558.3L298.53 560.6L298.65 568.6L298.78 553.1L298.90 562.0L299.03 558.5L299.15 565.0L299.28 567.5L299.40 562.0L299.53 555.4L299.65 567.6L299.78 557.5L299.90 552.7L300.03 571.0L300.15 563.7L300.28 558.6L300.40 555.2L300.53 570.8L300.65 556.8L300.78 557.8L300.90 567.8L301.03 561.0L301.15 566.0L301.28 558.7L301.40 554.6L301.53 559.6L301.65 554.9L301.78 556.6L301.90 558.1L302.03 557.2L302.15 556.9L302.28 555.2L302.40 558.4L302.53 563.4L302.65 560.0L302.78 560.1L302.90 558.7L303.03 559.9L303.15 558.6L303.28 554.3L303.40 558.5L303.53 563.1L303.65 560.7L303.78 546.3L303.90 557.8L304.03 554.0L304.15 558.2L304.28 551.3L304.40 558.8L304.53 547.5L304.66 555.9L304.78 551.4L304.91 554.5L305.03 551.7L305.16 557.2L305.28 555.1L305.41 557.2L305.53 558.5L305.66 557.2L305.78 557.8L305.91 555.0L306.03 556.7L306.16 552.5L306.28 549.2L306.41 545.6L306.53 544.0L306.66 544.2L306.78 547.5L306.91 556.2L307.03 544.3L307.16 556.3L307.28 543.0L307.41 556.4L307.53 550.4L307.66 543.0L307.78 553.1L307.91 555.3L308.03 550.8L308.16 557.8L308.28 547.5L308.41 552.5L308.53 549.6L308.66 548.7L308.78 541.6L308.91 551.7L309.03 548.6L309.16 557.7L309.28 557.6L309.41 554.0L309.53 555.8L309.66 553.6L309.78 553.7L309.91 558.0L310.03 557.9L310.16 565.8L310.28 555.4L310.41 554.3L310.53 561.3L310.66 549.4L310.78 555.6L310.91 557.1L311.03 562.6L311.16 550.8L311.28 554.9L311.41 554.8L311.53 543.4L311.66 559.0L311.78 555.3L311.91 556.2L312.03 547.2L312.16 563.9L312.28 555.4L312.41 549.8L312.53 553.5L312.66 562.4L312.78 560.5L312.91 560.2L313.03 566.8L313.16 558.0L313.28 562.3L313.41 559.5L313.53 556.4L313.66 553.9L313.78 555.2L313.91 560.1L314.03 564.3L314.16 555.0L314.28 556.8L314.41 557.6L314.53 555.1L314.66 561.7L314.78 556.2L314.91 557.6L315.03 556.0L315.16 563.2L315.28 557.1L315.41 564.5L315.53 563.8L315.66 562.8L315.78 566.9L315.91 564.5L316.03 565.3L316.16 562.5L316.28 562.3L316.41 561.8L316.53 565.7L316.66 558.6L316.78 558.6L316.91 560.8L317.03 554.7L317.16 560.4L317.28 558.2L317.41 557.8L317.53 554.9L317.66 563.8L317.78 552.2L317.91 552.4L318.03 554.6L318.16 549.0L318.28 554.2L318.41 553.8L318.53 548.9L318.66 554.3L318.79 542.7L318.91 555.3L319.04 556.8L319.16 551.9L319.29 558.8L319.41 555.4L319.54 553.1L319.66 541.1L319.79 544.2L319.91 544.4L320.04 549.7L320.16 546.7L320.29 555.4L320.41 544.4L320.54 539.4L320.66 544.5L320.79 542.4L320.91 531.9L321.04 540.7L321.16 538.3L321.29 540.6L321.41 547.9L321.54 545.6L321.66 539.6L321.79 541.2L321.91 547.8L322.04 535.1L322.16 539.7L322.29 541.1L322.41 537.9L322.54 538.8L322.66 524.3L322.79 534.2L322.91 542.8L323.04 530.9L323.16 533.8L323.29 538.4L323.41 536.9L323.54 536.1L323.66 528.8L323.79 542.4L323.91 534.4L324.04 524.6L324.16 533.8L324.29 532.0L324.41 527.2L324.54 520.4L324.66 530.6L324.79 523.6L324.91 532.9L325.04 526.2L325.16 531.1L325.29 529.1L325.41 530.5L325.54 529.0L325.66 520.9L325.79 525.8L325.91 519.1L326.04 523.3L326.16 522.6L326.29 519.5L326.41 524.9L326.54 523.7L326.66 531.6L326.79 530.7L326.91 525.9L327.04 518.8L327.16 517.0L327.29 517.4L327.41 516.3L327.54 514.1L327.66 514.9L327.79 512.9L327.91 515.8L328.04 521.6L328.16 511.4L328.29 526.5L328.41 510.7L328.54 509.2L328.66 530.2L328.79 520.8L328.91 500.7L329.04 510.9L329.16 521.0L329.29 517.2L329.41 512.7L329.54 512.0L329.66 517.9L329.79 497.2L329.91 517.6L330.04 510.6L330.16 508.1L330.29 511.8L330.41 517.7L330.54 497.6L330.66 508.7L330.79 507.4L330.91 509.5L331.04 511.7L331.16 503.8L331.29 506.7L331.41 497.5L331.54 506.3L331.66 503.2L331.79 499.8L331.91 498.7L332.04 497.0L332.16 497.8L332.29 486.6L332.41 504.4L332.54 509.7L332.67 497.2L332.79 499.6L332.92 496.1L333.04 509.5L333.17 499.3L333.29 497.8L333.42 495.1L333.54 483.9L333.67 495.9L333.79 494.3L333.92 509.4L334.04 483.6L334.17 481.0L334.29 483.1L334.42 480.3L334.54 475.6L334.67 476.4L334.79 474.8L334.92 501.8L335.04 474.9L335.17 480.7L335.29 492.1L335.42 490.9L335.54 474.9L335.67 475.5L335.79 478.1L335.92 489.1L336.04 482.2L336.17 483.9L336.29 485.5L336.42 476.8L336.54 488.6L336.67 488.4L336.79 495.0L336.92 495.6L337.04 483.4L337.17 488.8L337.29 481.0L337.42 485.7L337.54 486.0L337.67 482.1L337.79 478.7L337.92 483.5L338.04 487.1L338.17 480.1L338.29 485.5L338.42 481.7L338.54 484.0L338.67 480.5L338.79 480.1L338.92 495.2L339.04 489.4L339.17 481.1L339.29 483.6L339.42 481.4L339.54 481.5L339.67 478.6L339.79 481.8L339.92 496.0L340.04 483.0L340.17 492.7L340.29 499.2L340.42 492.6L340.54 494.6L340.67 484.1L340.79 487.0L340.92 493.4L341.04 498.7L341.17 478.4L341.29 484.7L341.42 471.3L341.54 472.9L341.67 475.2L341.79 489.5L341.92 499.3L342.04 478.4L342.17 483.7L342.29 487.3L342.42 487.2L342.54 484.5L342.67 492.7L342.79 487.3L342.92 471.5L343.04 488.9L343.17 472.9L343.29 483.9L343.42 488.8L343.54 480.8L343.67 487.3L343.79 481.5L343.92 487.4L344.04 488.3L344.17 490.4L344.29 475.6L344.42 487.9L344.54 487.6L344.67 491.0L344.79 489.3L344.92 483.7L345.04 484.3L345.17 488.9L345.29 477.3L345.42 496.4L345.54 489.1L345.67 493.0L345.79 483.8L345.92 489.7L346.04 484.7L346.17 491.5L346.29 483.9L346.42 487.7L346.54 487.6L346.67 481.6L346.80 491.9L346.92 485.3L347.05 493.6L347.17 482.7L347.30 488.4L347.42 481.6L347.55 486.9L347.67 489.4L347.80 494.6L347.92 488.1L348.05 480.2L348.17 491.8L348.30 487.0L348.42 488.0L348.55 483.4L348.67 487.9L348.80 477.6L348.92 492.4L349.05 498.0L349.17 496.5L349.30 487.6L349.42 496.0L349.55 491.6L349.67 490.8L349.80 510.5L349.92 490.4L350.05 494.4L350.17 488.5L350.30 489.6L350.42 490.8L350.55 490.7L350.67 488.7L350.80 495.5L350.92 506.5L351.05 507.4L351.17 489.1L351.30 494.6L351.42 498.2L351.55 489.5L351.67 501.1L351.80 499.0L351.92 492.7L352.05 487.9L352.17 494.5L352.30 495.3L352.42 507.3L352.55 508.6L352.67 490.2L352.80 499.3L352.92 508.3L353.05 492.6L353.17 500.9L353.30 494.2L353.42 506.2L353.55 500.8L353.67 505.9L353.80 499.1L353.92 497.0L354.05 502.2L354.17 506.3L354.30 509.2L354.42 511.2L354.55 506.2L354.67 485.5L354.80 485.9L354.92 517.8L355.05 502.7L355.17 501.9L355.30 506.7L355.42 507.7L355.55 504.4L355.67 504.2L355.80 508.5L355.92 496.9L356.05 513.8L356.17 504.1L356.30 517.2L356.42 505.2L356.55 516.5L356.67 515.6L356.80 511.8L356.92 521.9L357.05 505.8L357.17 516.1L357.30 510.7L357.42 520.8L357.55 521.5L357.67 523.1L357.80 528.0L357.92 508.9L358.05 513.9L358.17 524.1L358.30 512.1L358.42 512.3L358.55 519.2L358.67 525.2L358.80 525.6L358.92 536.5L359.05 531.4L359.17 529.6L359.30 533.6L359.42 538.1L359.55 540.9L359.67 545.6L359.80 548.1L359.92 551.5L360.05 555.8L360.17 558.9L360.30 564.1L360.42 568.2L360.55 571.7L360.67 576.8L360.80 579.8 M373.30 551.8L373.43 546.3L373.55 542.5L373.68 537.3L373.80 535.2L373.93 528.9L374.05 526.2L374.18 519.2L374.30 516.6L374.43 514.2L374.55 511.5L374.68 510.7L374.80 508.6L374.93 491.8L375.05 510.9L375.18 510.5L375.30 502.1L375.43 493.4L375.55 489.6L375.68 515.9L375.80 499.3L375.93 496.5L376.05 505.4L376.18 490.9L376.30 486.0L376.43 500.0L376.55 501.6L376.68 480.0L376.80 499.8L376.93 495.0L377.05 490.1L377.18 496.8L377.30 490.1L377.43 499.5L377.55 507.4L377.68 479.7L377.80 490.4L377.93 492.4L378.05 506.7L378.18 504.6L378.30 489.1L378.43 483.5L378.55 488.2L378.68 487.1L378.80 488.9L378.93 482.0L379.05 481.9L379.18 481.4L379.30 482.2L379.43 491.7L379.55 475.0L379.68 481.8L379.80 489.0L379.93 490.5L380.05 504.5L380.18 493.8L380.30 489.2L380.43 481.0L380.55 497.5L380.68 491.1L380.80 472.9L380.93 494.8L381.05 487.9L381.18 507.6L381.30 497.5L381.43 481.0L381.55 471.0L381.68 469.2L381.80 502.0L381.93 492.6L382.05 475.7L382.18 484.9L382.30 501.5L382.43 504.8L382.55 493.3L382.68 482.6L382.80 499.8L382.93 480.2L383.05 493.9L383.18 479.3L383.31 487.7L383.43 486.2L383.56 485.9L383.68 491.6L383.81 478.2L383.93 480.7L384.06 504.5L384.18 495.4L384.31 490.4L384.43 478.7L384.56 466.7L384.68 477.2L384.81 476.5L384.93 484.2L385.06 481.0L385.18 491.1L385.31 480.8L385.43 487.6L385.56 467.9L385.68 470.8L385.81 481.9L385.93 473.9L386.06 489.3L386.18 472.0L386.31 461.6L386.43 466.7L386.56 474.0L386.68 467.3L386.81 472.2L386.93 496.0L387.06 472.3L387.18 469.4L387.31 458.5L387.43 455.4L387.56 469.2L387.68 471.6L387.81 463.4L387.93 480.6L388.06 465.7L388.18 476.7L388.31 463.5L388.43 480.1L388.56 470.1L388.68 481.9L388.81 456.6L388.93 471.0L389.06 473.8L389.18 473.8L389.31 457.3L389.43 468.4L389.56 489.7L389.68 484.6L389.81 470.7L389.93 484.2L390.06 470.9L390.18 468.8L390.31 480.2L390.43 488.6L390.56 463.9L390.68 480.5L390.81 485.6L390.93 486.6L391.06 501.8L391.18 490.3L391.31 496.3L391.43 484.0L391.56 492.3L391.68 503.0L391.81 488.9L391.93 483.1L392.06 497.5L392.18 489.5L392.31 498.0L392.43 495.0L392.56 502.8L392.68 507.6L392.81 493.6L392.93 503.9L393.06 504.2L393.19 502.9L393.31 506.0L393.44 499.4L393.56 490.4L393.69 485.6L393.81 502.4L393.94 471.7L394.06 483.9L394.19 475.1L394.31 480.5L394.44 498.0L394.56 486.4L394.69 481.2L394.81 482.3L394.94 484.7L395.06 477.5L395.19 464.0L395.31 487.7L395.44 479.4L395.56 485.5L395.69 455.9L395.81 471.2L395.94 466.3L396.06 457.4L396.19 481.7L396.31 472.0L396.44 477.9L396.56 449.9L396.69 458.5L396.81 472.7L396.94 469.8L397.06 480.0L397.19 473.1L397.31 475.0L397.44 456.9L397.56 487.7L397.69 478.0L397.81 471.4L397.94 461.6L398.06 476.4L398.19 473.4L398.31 483.0L398.44 464.5L398.56 475.8L398.69 456.5L398.81 485.7L398.94 497.8L399.06 468.8L399.19 483.9L399.31 476.7L399.44 472.2L399.56 474.9L399.69 467.2L399.81 484.0L399.94 490.4L400.06 485.9L400.19 488.3L400.31 484.3L400.44 498.2L400.56 494.5L400.69 481.1L400.81 469.9L400.94 467.7L401.06 481.8L401.19 480.1L401.31 476.7L401.44 493.0L401.56 482.8L401.69 469.6L401.81 486.5L401.94 478.2L402.06 487.5L402.19 493.1L402.31 471.4L402.44 498.9L402.56 486.1L402.69 489.4L402.81 490.6L402.94 495.2L403.07 498.5L403.19 488.5L403.32 483.1L403.44 485.1L403.57 496.6L403.69 483.7L403.82 490.3L403.94 494.8L404.07 486.8L404.19 490.9L404.32 479.8L404.44 503.1L404.57 504.8L404.69 501.9L404.82 480.6L404.94 490.6L405.07 493.1L405.19 489.4L405.32 521.9L405.44 487.3L405.57 498.5L405.69 479.9L405.82 480.9L405.94 501.5L406.07 497.4L406.19 503.9L406.32 487.3L406.44 488.6L406.57 502.5L406.69 492.7L406.82 482.5L406.94 484.7L407.07 488.6L407.19 488.8L407.32 490.1L407.44 502.6L407.57 492.8L407.69 492.8L407.82 472.0L407.94 477.8L408.07 476.2L408.19 508.1L408.32 499.0L408.44 475.7L408.57 487.6L408.69 470.4L408.82 500.8L408.94 479.5L409.07 514.3L409.19 482.6L409.32 500.1L409.44 474.4L409.57 481.8L409.69 482.1L409.82 472.1L409.94 484.6L410.07 476.2L410.19 504.9L410.32 484.9L410.44 459.2L410.57 487.1L410.69 476.3L410.82 487.6L410.94 483.3L411.07 468.4L411.19 490.0L411.32 473.0L411.44 494.1L411.57 512.0L411.69 483.4L411.82 486.3L411.94 459.9L412.07 480.2L412.19 466.6L412.32 469.3L412.44 476.5L412.57 483.5L412.69 483.0L412.82 484.8L412.94 476.5L413.07 468.3L413.20 482.4L413.32 486.2L413.45 480.4L413.57 482.5L413.70 482.4L413.82 498.3L413.95 486.0L414.07 485.2L414.20 479.0L414.32 480.1L414.45 476.0L414.57 479.1L414.70 494.4L414.82 478.9L414.95 458.1L415.07 474.1L415.20 499.4L415.32 473.5L415.45 483.2L415.57 493.5L415.70 478.8L415.82 503.4L415.95 488.8L416.07 481.6L416.20 484.9L416.32 463.9L416.45 470.4L416.57 495.9L416.70 467.8L416.82 506.3L416.95 489.8L417.07 480.7L417.20 482.0L417.32 494.4L417.45 486.1L417.57 478.9L417.70 465.3L417.82 475.5L417.95 477.3L418.07 480.2L418.20 497.0L418.32 474.6L418.45 493.7L418.57 509.3L418.70 483.0L418.82 491.2L418.95 486.8L419.07 489.6L419.20 487.5L419.32 483.0L419.45 488.8L419.57 493.9L419.70 506.3L419.82 480.0L419.95 480.6L420.07 491.2L420.20 487.3L420.32 489.4L420.45 485.9L420.57 476.6L420.70 473.6L420.82 482.5L420.95 477.6L421.07 492.8L421.20 488.4L421.32 494.0L421.45 485.6L421.57 488.1L421.70 489.6L421.82 494.9L421.95 477.1L422.07 482.1L422.20 496.1L422.32 509.7L422.45 487.9L422.57 498.9L422.70 486.0L422.82 478.4L422.95 482.1L423.08 493.4L423.20 497.2L423.33 497.6L423.45 483.5L423.58 486.3L423.70 502.2L423.83 490.8L423.95 494.8L424.08 521.2L424.20 497.9L424.33 498.7L424.45 503.2L424.58 486.4L424.70 497.9L424.83 502.3L424.95 495.5L425.08 494.3L425.20 510.5L425.33 494.2L425.45 501.9L425.58 518.5L425.70 493.1L425.83 506.1L425.95 507.6L426.08 488.4L426.20 521.5L426.33 505.0L426.45 506.7L426.58 509.7L426.70 490.3L426.83 491.9L426.95 483.7L427.08 504.9L427.20 489.9L427.33 501.1L427.45 500.8L427.58 501.6L427.70 506.6L427.83 498.7L427.95 522.2L428.08 479.5L428.20 494.5L428.33 509.2L428.45 490.2L428.58 494.3L428.70 495.4L428.83 506.2L428.95 500.2L429.08 495.1L429.20 497.8L429.33 503.0L429.45 509.9L429.58 495.7L429.70 501.3L429.83 496.6L429.95 493.6L430.08 504.1L430.20 507.8L430.33 488.9L430.45 499.9L430.58 507.2L430.70 500.2L430.83 491.2L430.95 484.0L431.08 499.9L431.20 511.0L431.33 495.1L431.45 498.5L431.58 500.8L431.70 501.0L431.83 509.9L431.95 472.1L432.08 505.8L432.20 505.7L432.33 511.5L432.45 508.2L432.58 500.9L432.70 485.4L432.83 504.0L432.96 513.6L433.08 507.9L433.21 505.7L433.33 509.2L433.46 515.5L433.58 502.0L433.71 496.1L433.83 492.6L433.96 502.2L434.08 514.4L434.21 511.1L434.33 531.6L434.46 503.5L434.58 503.9L434.71 501.8L434.83 506.6L434.96 502.8L435.08 510.5L435.21 490.3L435.33 507.2L435.46 502.9L435.58 498.6L435.71 498.1L435.83 501.0L435.96 498.8L436.08 494.7L436.21 509.3L436.33 508.0L436.46 505.2L436.58 504.9L436.71 507.4L436.83 495.2L436.96 498.6L437.08 497.7L437.21 504.2L437.33 506.0L437.46 505.7L437.58 502.3L437.71 513.9L437.83 488.4L437.96 498.5L438.08 494.8L438.21 492.3L438.33 503.4L438.46 490.6L438.58 502.7L438.71 506.1L438.83 508.5L438.96 508.2L439.08 504.3L439.21 493.9L439.33 488.9L439.46 498.6L439.58 501.4L439.71 522.8L439.83 497.1L439.96 507.1L440.08 510.9L440.21 513.6L440.33 511.3L440.46 502.5L440.58 505.0L440.71 515.4L440.83 488.8L440.96 499.3L441.08 502.9L441.21 508.1L441.33 507.0L441.46 496.2L441.58 506.6L441.71 506.0L441.83 508.4L441.96 509.1L442.08 496.2L442.21 494.2L442.33 524.8L442.46 507.3L442.58 513.8L442.71 496.8L442.84 514.4L442.96 512.1L443.09 497.3L443.21 509.5L443.34 497.6L443.46 501.6L443.59 498.7L443.71 489.8L443.84 503.5L443.96 504.0L444.09 517.1L444.21 495.9L444.34 512.0L444.46 491.7L444.59 497.2L444.71 502.1L444.84 511.6L444.96 496.5L445.09 509.6L445.21 498.9L445.34 501.9L445.46 495.9L445.59 502.0L445.71 490.4L445.84 496.6L445.96 517.2L446.09 494.3L446.21 497.9L446.34 510.9L446.46 506.9L446.59 511.5L446.71 491.0L446.84 509.1L446.96 506.8L447.09 498.6L447.21 507.2L447.34 501.7L447.46 509.2L447.59 498.3L447.71 519.5L447.84 490.0L447.96 507.3L448.09 487.7L448.21 492.5L448.34 493.1L448.46 515.6L448.59 507.7L448.71 494.6L448.84 495.3L448.96 501.1L449.09 504.7L449.21 485.6L449.34 500.5L449.46 496.6L449.59 502.5L449.71 496.9L449.84 494.1L449.96 501.5L450.09 498.0L450.21 498.5L450.34 509.2L450.46 493.6L450.59 493.3L450.71 491.3L450.84 511.0L450.96 500.8L451.09 510.6L451.21 511.5L451.34 505.3L451.46 509.0L451.59 507.1L451.71 499.7L451.84 493.2L451.96 488.1L452.09 497.6L452.21 509.4L452.34 495.1L452.46 507.3L452.59 487.3L452.72 494.9L452.84 504.9L452.97 482.6L453.09 498.3L453.22 507.3L453.34 488.0L453.47 502.3L453.59 503.1L453.72 510.0L453.84 491.5L453.97 494.0L454.09 489.8L454.22 489.7L454.34 494.8L454.47 487.3L454.59 491.9L454.72 498.5L454.84 484.3L454.97 492.0L455.09 472.0L455.22 493.0L455.34 484.0L455.47 495.1L455.59 497.3L455.72 490.7L455.84 505.7L455.97 492.4L456.09 491.3L456.22 485.5L456.34 501.4L456.47 491.1L456.59 486.2L456.72 480.1L456.84 486.0L456.97 478.7L457.09 483.2L457.22 484.5L457.34 492.0L457.47 509.9L457.59 482.0L457.72 484.9L457.84 490.8L457.97 485.4L458.09 511.4L458.22 501.0L458.34 494.3L458.47 491.9L458.59 497.6L458.72 486.0L458.84 491.6L458.97 484.9L459.09 488.0L459.22 472.0L459.34 493.3L459.47 488.2L459.59 496.1L459.72 487.2L459.84 488.9L459.97 496.8L460.09 485.2L460.22 488.7L460.34 489.9L460.47 486.5L460.59 496.8L460.72 499.9L460.84 495.3L460.97 492.7L461.09 501.8L461.22 488.0L461.34 492.5L461.47 498.9L461.59 495.6L461.72 493.7L461.84 517.2L461.97 497.6L462.09 512.8L462.22 498.8L462.34 492.3L462.47 499.9L462.60 481.8L462.72 495.1L462.85 511.7L462.97 489.0L463.10 500.0L463.22 505.5L463.35 496.1L463.47 482.7L463.60 511.6L463.72 494.1L463.85 504.3L463.97 499.7L464.10 512.8L464.22 515.3L464.35 495.8L464.47 513.1L464.60 507.5L464.72 497.9L464.85 508.9L464.97 497.2L465.10 494.9L465.22 512.0L465.35 508.6L465.47 507.6L465.60 507.7L465.72 498.6L465.85 513.2L465.97 504.6L466.10 509.4L466.22 496.6L466.35 507.6L466.47 502.6L466.60 516.5L466.72 529.9L466.85 510.9L466.97 508.1L467.10 518.1L467.22 506.8L467.35 508.8L467.47 506.1L467.60 519.5L467.72 508.5L467.85 522.6L467.97 509.4L468.10 509.6L468.22 522.3L468.35 518.5L468.47 505.1L468.60 509.3L468.72 505.4L468.85 517.4L468.97 515.6L469.10 497.0L469.22 491.0L469.35 518.7L469.47 506.1L469.60 533.1L469.72 505.5L469.85 508.4L469.97 503.0L470.10 527.7L470.22 522.4L470.35 513.7L470.47 508.2L470.60 521.9L470.72 507.6L470.85 517.0L470.97 504.6L471.10 512.2L471.22 514.1L471.35 512.2L471.47 515.8L471.60 523.9L471.72 525.4L471.85 515.9L471.97 508.5L472.10 507.0L472.22 507.5L472.35 512.4L472.48 504.2L472.60 512.5L472.73 518.7L472.85 505.7L472.98 505.9L473.10 518.0L473.23 504.4L473.35 511.9L473.48 520.3L473.60 518.8L473.73 531.6L473.85 509.9L473.98 514.8L474.10 515.9L474.23 513.2L474.35 519.2L474.48 513.9L474.60 507.9L474.73 515.8L474.85 500.5L474.98 479.3L475.10 511.8L475.23 517.5L475.35 499.7L475.48 508.4L475.60 502.3L475.73 509.0L475.85 511.6L475.98 509.4L476.10 525.9L476.23 525.5L476.35 509.0L476.48 536.4L476.60 520.5L476.73 505.2L476.85 512.1L476.98 508.1L477.10 508.5L477.23 482.7L477.35 511.0L477.48 527.3L477.60 497.2L477.73 513.1L477.85 507.6L477.98 496.8L478.10 507.1L478.23 499.2L478.35 521.4L478.48 504.3L478.60 500.0L478.73 499.8L478.85 507.6L478.98 496.6L479.10 501.3L479.23 509.6L479.35 492.2L479.48 510.4L479.60 502.4L479.73 519.0L479.85 514.2L479.98 511.7L480.10 501.5L480.23 505.0L480.35 500.3L480.48 516.5L480.60 507.0L480.73 503.4L480.85 503.1L480.98 503.2L481.10 504.3L481.23 500.1L481.35 496.8L481.48 506.5L481.60 502.3L481.73 503.0L481.85 499.4L481.98 490.3L482.10 508.9L482.23 494.4L482.36 497.2L482.48 496.7L482.61 490.8L482.73 500.6L482.86 498.3L482.98 504.4L483.11 497.7L483.23 516.4L483.36 491.4L483.48 511.5L483.61 508.1L483.73 505.3L483.86 504.6L483.98 507.2L484.11 509.2L484.23 505.6L484.36 521.4L484.48 518.8L484.61 515.1L484.73 519.3L484.86 503.5L484.98 524.0L485.11 527.0L485.23 520.7L485.36 520.7L485.48 514.0L485.61 516.8L485.73 498.9L485.86 513.0L485.98 528.4L486.11 516.5L486.23 524.6L486.36 522.6L486.48 507.1L486.61 517.4L486.73 532.6L486.86 533.5L486.98 535.7L487.11 523.2L487.23 522.9L487.36 523.9L487.48 519.5L487.61 537.3L487.73 524.0L487.86 526.9L487.98 521.6L488.11 525.5L488.23 525.8L488.36 520.4L488.48 529.8L488.61 532.5L488.73 519.3L488.86 524.9L488.98 528.8L489.11 545.1L489.23 506.6L489.36 522.2L489.48 508.8L489.61 523.7L489.73 530.5L489.86 538.0L489.98 530.3L490.11 523.2L490.23 526.2L490.36 518.3L490.48 520.8L490.61 514.0L490.73 524.4L490.86 522.1L490.98 526.4L491.11 525.7L491.23 520.8L491.36 502.7L491.48 521.8L491.61 523.3L491.73 522.2L491.86 519.0L491.98 526.2L492.11 509.5L492.23 517.1L492.36 512.1L492.49 522.4L492.61 509.2L492.74 524.7L492.86 509.5L492.99 515.3L493.11 514.5L493.24 513.2L493.36 503.7L493.49 516.4L493.61 505.0L493.74 513.8L493.86 513.9L493.99 522.4L494.11 513.3L494.24 513.1L494.36 514.5L494.49 532.1L494.61 499.1L494.74 507.8L494.86 517.0L494.99 522.9L495.11 510.1L495.24 491.0L495.36 514.1L495.49 507.8L495.61 516.6L495.74 506.0L495.86 513.7L495.99 504.3L496.11 516.6L496.24 509.7L496.36 511.9L496.49 507.7L496.61 508.6L496.74 488.4L496.86 516.7L496.99 506.0L497.11 504.4L497.24 498.7L497.36 506.7L497.49 506.8L497.61 508.6L497.74 521.2L497.86 497.7L497.99 512.9L498.11 506.4L498.24 481.7L498.36 502.6L498.49 499.1L498.61 520.2L498.74 489.1L498.86 485.2L498.99 494.8L499.11 497.0L499.24 497.3L499.36 494.9L499.49 510.3L499.61 494.0L499.74 493.4L499.86 488.6L499.99 503.6L500.11 504.2L500.24 509.3L500.36 492.5L500.49 481.7L500.61 502.2L500.74 480.7L500.86 505.2L500.99 498.0L501.11 500.0L501.24 497.9L501.36 504.1L501.49 502.2L501.61 497.8L501.74 492.1L501.86 508.2L501.99 488.5L502.11 495.6L502.24 499.1L502.37 489.0L502.49 489.2L502.62 486.9L502.74 488.1L502.87 501.2L502.99 491.6L503.12 501.1L503.24 478.7L503.37 473.5L503.49 496.3L503.62 505.2L503.74 491.6L503.87 490.9L503.99 488.2L504.12 497.8L504.24 489.3L504.37 489.6L504.49 485.6L504.62 487.8L504.74 497.5L504.87 483.6L504.99 489.2L505.12 498.4L505.24 483.9L505.37 491.1L505.49 504.2L505.62 496.1L505.74 504.4L505.87 490.8L505.99 502.4L506.12 495.7L506.24 501.0L506.37 516.8L506.49 477.7L506.62 486.8L506.74 517.6L506.87 492.5L506.99 485.3L507.12 489.0L507.24 487.5L507.37 487.5L507.49 498.5L507.62 485.7L507.74 485.7L507.87 495.6L507.99 483.6L508.12 499.9L508.24 502.3L508.37 484.6L508.49 481.4L508.62 502.0L508.74 483.7L508.87 478.2L508.99 492.2L509.12 488.9L509.24 497.0L509.37 484.8L509.49 486.0L509.62 493.6L509.74 494.3L509.87 487.7L509.99 493.1L510.12 493.4L510.24 495.6L510.37 462.8L510.49 478.4L510.62 487.4L510.74 482.5L510.87 477.4L510.99 479.7L511.12 476.9L511.24 485.8L511.37 473.1L511.49 480.3L511.62 491.2L511.74 485.0L511.87 476.9L511.99 498.4L512.12 497.7L512.25 492.6L512.37 486.8L512.50 490.5L512.62 504.2L512.75 493.6L512.87 501.1L513.00 490.4L513.12 487.7L513.25 506.3L513.37 501.8L513.50 492.0L513.62 499.4L513.75 495.5L513.87 504.7L514.00 515.5L514.12 500.3L514.25 497.1L514.37 496.7L514.50 496.5L514.62 502.6L514.75 501.7L514.87 508.8L515.00 511.3L515.12 514.8L515.25 514.8L515.37 507.2L515.50 518.1L515.62 505.8L515.75 508.5L515.87 499.2L516.00 521.5L516.12 526.0L516.25 510.9L516.37 523.5L516.50 512.3L516.62 507.8L516.75 514.3L516.87 507.1L517.00 531.0L517.12 506.2L517.25 511.9L517.37 517.7L517.50 508.0L517.62 515.9L517.75 517.4L517.87 519.5L518.00 523.2L518.12 516.7L518.25 523.6L518.37 508.6L518.50 529.6L518.62 526.4L518.75 524.3L518.87 526.7L519.00 523.7L519.12 529.0L519.25 530.4L519.37 520.6L519.50 536.6L519.62 532.6L519.75 527.5L519.87 534.0L520.00 525.9L520.12 524.1L520.25 533.9L520.37 533.3L520.50 531.4L520.62 531.5L520.75 535.4L520.87 535.4L521.00 538.8L521.12 542.9L521.25 546.1L521.37 548.4L521.50 550.9L521.62 553.3L521.75 557.8L521.87 561.1L522.00 563.8 M534.30 577.8L534.43 573.8L534.55 569.9L534.68 565.7L534.80 561.6L534.93 557.9L535.05 555.5L535.18 550.7L535.30 546.4L535.43 541.1L535.55 539.0L535.68 538.2L535.80 536.4L535.93 531.2L536.05 532.1L536.18 534.7L536.30 531.5L536.43 538.7L536.55 530.3L536.68 534.2L536.80 540.7L536.93 530.2L537.05 530.6L537.18 511.7L537.30 515.3L537.43 528.2L537.55 519.7L537.68 520.8L537.80 524.7L537.93 516.7L538.05 503.0L538.18 516.9L538.30 515.4L538.43 513.8L538.55 514.6L538.68 513.9L538.80 508.9L538.93 515.4L539.05 514.5L539.18 514.6L539.30 501.1L539.43 502.7L539.55 507.9L539.68 507.0L539.80 504.4L539.93 504.6L540.05 505.8L540.18 502.5L540.30 508.7L540.43 500.4L540.55 514.3L540.68 497.1L540.80 502.4L540.93 495.4L541.05 482.2L541.18 492.6L541.30 509.5L541.43 500.6L541.55 490.8L541.68 501.2L541.80 503.4L541.93 496.7L542.05 505.9L542.18 498.1L542.30 500.9L542.43 493.8L542.55 503.1L542.68 494.5L542.80 500.9L542.93 495.4L543.05 488.0L543.18 499.4L543.30 491.1L543.43 493.0L543.55 500.6L543.68 504.8L543.80 506.8L543.93 502.4L544.05 500.9L544.18 479.4L544.31 490.0L544.43 485.8L544.56 482.2L544.68 487.5L544.81 488.1L544.93 481.5L545.06 482.6L545.18 484.1L545.31 492.0L545.43 486.2L545.56 492.2L545.68 488.6L545.81 481.5L545.93 484.8L546.06 492.1L546.18 490.8L546.31 479.4L546.43 487.2L546.56 485.4L546.68 484.0L546.81 481.8L546.93 487.6L547.06 493.7L547.18 488.3L547.31 484.3L547.43 489.8L547.56 484.0L547.68 471.1L547.81 480.6L547.93 485.3L548.06 483.2L548.18 485.5L548.31 489.8L548.43 481.6L548.56 482.6L548.68 486.8L548.81 484.1L548.93 476.6L549.06 481.9L549.18 475.3L549.31 489.9L549.43 478.8L549.56 479.5L549.68 477.9L549.81 483.2L549.93 480.3L550.06 485.2L550.18 473.1L550.31 500.3L550.43 485.8L550.56 488.5L550.68 484.3L550.81 482.7L550.93 496.0L551.06 484.1L551.18 488.3L551.31 489.3L551.43 498.3L551.56 495.4L551.68 497.9L551.81 487.7L551.93 492.6L552.06 491.7L552.18 504.8L552.31 505.5L552.43 490.4L552.56 496.4L552.68 503.0L552.81 503.4L552.93 501.9L553.06 504.6L553.18 503.7L553.31 498.5L553.43 504.4L553.56 497.8L553.68 501.6L553.81 501.9L553.93 501.8L554.06 499.9L554.18 504.7L554.31 505.3L554.44 512.9L554.56 503.5L554.69 506.3L554.81 506.1L554.94 503.2L555.06 519.6L555.19 513.5L555.31 518.5L555.44 518.1L555.56 517.1L555.69 514.4L555.81 521.6L555.94 518.1L556.06 515.4L556.19 515.9L556.31 516.1L556.44 525.0L556.56 521.7L556.69 520.6L556.81 526.4L556.94 519.6L557.06 526.0L557.19 524.8L557.31 530.4L557.44 527.9L557.56 525.6L557.69 528.0L557.81 532.5L557.94 518.8L558.06 519.8L558.19 525.1L558.31 524.2L558.44 527.7L558.56 532.2L558.69 520.4L558.81 529.3L558.94 522.4L559.06 537.4L559.19 533.1L559.31 534.6L559.44 534.4L559.56 534.4L559.69 538.5L559.81 533.9L559.94 534.1L560.06 527.8L560.19 526.0L560.31 537.6L560.44 530.8L560.56 537.0L560.69 537.2L560.81 538.6L560.94 537.2L561.06 534.5L561.19 546.1L561.31 545.5L561.44 542.7L561.56 538.4L561.69 542.5L561.81 535.2L561.94 546.5L562.06 557.2L562.19 549.2L562.31 545.9L562.44 548.3L562.56 549.5L562.69 544.3L562.81 553.0L562.94 547.2L563.06 553.4L563.19 544.8L563.31 553.6L563.44 550.7L563.56 539.6L563.69 543.4L563.81 550.8L563.94 565.7L564.06 549.0L564.19 552.6L564.32 545.7L564.44 553.2L564.57 552.0L564.69 552.4L564.82 551.3L564.94 551.5L565.07 545.1L565.19 544.1L565.32 560.3L565.44 554.3L565.57 550.7L565.69 547.2L565.82 555.2L565.94 560.1L566.07 562.9L566.19 559.6L566.32 561.4L566.44 557.9L566.57 549.9L566.69 548.5L566.82 561.1L566.94 557.3L567.07 555.2L567.19 551.0L567.32 563.2L567.44 562.9L567.57 558.9L567.69 566.1L567.82 586.0L567.94 570.0L568.07 571.3L568.19 567.8L568.32 564.6L568.44 562.3L568.57 570.2L568.69 569.7L568.82 572.4L568.94 572.5L569.07 563.1L569.19 573.4L569.32 569.6L569.44 569.7L569.57 587.0L569.69 569.1L569.82 574.0L569.94 573.6L570.07 582.5L570.19 576.1L570.32 569.4L570.44 577.6L570.57 586.8L570.69 574.4L570.82 579.7L570.94 576.8L571.07 581.0L571.19 567.1L571.32 568.8L571.44 567.1L571.57 579.2L571.69 579.0L571.82 579.4L571.94 576.5L572.07 572.4L572.19 573.3L572.32 586.3L572.44 593.0L572.57 592.1L572.69 576.0L572.82 585.1L572.94 589.5L573.07 577.6L573.19 569.6L573.32 583.8L573.44 572.2L573.57 575.6L573.69 576.0L573.82 584.5L573.94 579.4L574.07 596.8L574.19 595.4L574.32 585.3L574.45 577.8L574.57 589.6L574.70 574.4L574.82 586.7L574.95 581.8L575.07 581.2L575.20 588.5L575.32 589.7L575.45 581.3L575.57 585.5L575.70 588.8L575.82 595.5L575.95 583.6L576.07 586.4L576.20 566.3L576.32 596.3L576.45 586.5L576.57 591.7L576.70 582.7L576.82 596.5L576.95 583.8L577.07 586.7L577.20 571.4L577.32 595.4L577.45 592.3L577.57 574.3L577.70 595.3L577.82 578.7L577.95 585.3L578.07 598.2L578.20 591.5L578.32 592.8L578.45 585.2L578.57 583.8L578.70 578.4L578.82 591.5L578.95 580.0L579.07 587.2L579.20 583.1L579.32 587.2L579.45 601.3L579.57 589.4L579.70 581.8L579.82 590.7L579.95 595.3L580.07 596.9L580.20 586.1L580.32 576.5L580.45 575.9L580.57 600.6L580.70 600.1L580.82 594.1L580.95 587.6L581.07 589.7L581.20 591.0L581.32 587.6L581.45 584.8L581.57 585.1L581.70 591.2L581.82 588.7L581.95 590.0L582.07 587.6L582.20 592.4L582.32 590.6L582.45 582.4L582.57 594.9L582.70 589.7L582.82 581.1L582.95 599.0L583.07 586.0L583.20 585.1L583.32 594.3L583.45 608.5L583.57 584.7L583.70 590.0L583.82 598.0L583.95 569.1L584.07 592.1L584.20 587.3L584.33 586.3L584.45 590.5L584.58 582.0L584.70 592.8L584.83 596.2L584.95 595.6L585.08 589.8L585.20 595.5L585.33 585.9L585.45 586.2L585.58 586.2L585.70 589.2L585.83 596.3L585.95 577.7L586.08 585.3L586.20 588.5L586.33 590.8L586.45 597.3L586.58 589.2L586.70 585.5L586.83 589.8L586.95 591.4L587.08 593.2L587.20 586.7L587.33 594.7L587.45 590.2L587.58 596.1L587.70 594.2L587.83 591.7L587.95 581.9L588.08 594.4L588.20 601.2L588.33 598.3L588.45 583.3L588.58 596.3L588.70 588.7L588.83 574.7L588.95 598.0L589.08 585.2L589.20 588.3L589.33 587.9L589.45 587.4L589.58 597.4L589.70 596.4L589.83 597.2L589.95 584.3L590.08 589.4L590.20 595.7L590.33 594.2L590.45 609.7L590.58 597.0L590.70 589.0L590.83 599.2L590.95 589.7L591.08 595.0L591.20 582.8L591.33 601.1L591.45 605.3L591.58 580.0L591.70 593.6L591.83 600.4L591.95 603.2L592.08 599.5L592.20 594.7L592.33 597.4L592.45 607.9L592.58 586.0L592.70 591.2L592.83 595.6L592.95 600.1L593.08 586.5L593.20 594.4L593.33 603.3L593.45 601.8L593.58 601.0L593.70 593.4L593.83 593.3L593.95 594.3L594.08 594.2L594.21 596.7L594.33 589.9L594.46 593.1L594.58 589.4L594.71 597.4L594.83 603.0L594.96 590.0L595.08 605.1L595.21 585.6L595.33 602.7L595.46 590.3L595.58 582.8L595.71 595.3L595.83 591.1L595.96 598.8L596.08 605.0L596.21 595.9L596.33 601.4L596.46 593.3L596.58 591.9L596.71 589.5L596.83 593.3L596.96 603.8L597.08 593.2L597.21 593.7L597.33 591.5L597.46 583.8L597.58 587.1L597.71 607.7L597.83 591.8L597.96 602.8L598.08 609.1L598.21 606.9L598.33 600.5L598.46 598.3L598.58 600.7L598.71 602.3L598.83 587.5L598.96 597.3L599.08 599.0L599.21 587.2L599.33 603.8L599.46 605.6L599.58 595.6L599.71 583.0L599.83 604.2L599.96 602.3L600.08 591.8L600.21 604.8L600.33 591.0L600.46 588.0L600.58 587.3L600.71 598.0L600.83 612.6L600.96 603.1L601.08 606.3L601.21 596.6L601.33 599.0L601.46 594.7L601.58 586.6L601.71 580.2L601.83 599.2L601.96 583.5L602.08 596.8L602.21 602.8L602.33 599.6L602.46 590.9L602.58 592.5L602.71 580.1L602.83 599.5L602.96 589.4L603.08 605.7L603.21 587.9L603.33 592.1L603.46 594.9L603.58 589.3L603.71 585.2L603.83 579.6L603.96 588.5L604.08 586.9L604.21 585.7L604.34 596.8L604.46 608.0L604.59 583.9L604.71 597.9L604.84 582.9L604.96 589.9L605.09 584.3L605.21 576.1L605.34 600.0L605.46 581.1L605.59 596.6L605.71 581.3L605.84 588.0L605.96 586.3L606.09 588.1L606.21 583.2L606.34 581.2L606.46 583.4L606.59 599.9L606.71 570.5L606.84 596.1L606.96 604.8L607.09 586.4L607.21 584.0L607.34 599.7L607.46 579.7L607.59 597.6L607.71 586.8L607.84 596.2L607.96 575.9L608.09 592.9L608.21 566.6L608.34 583.0L608.46 582.7L608.59 591.9L608.71 596.9L608.84 602.0L608.96 575.7L609.09 577.2L609.21 594.2L609.34 581.4L609.46 581.6L609.59 576.5L609.71 590.7L609.84 575.4L609.96 585.6L610.09 571.7L610.21 583.5L610.34 582.2L610.46 596.3L610.59 587.0L610.71 583.4L610.84 580.7L610.96 590.0L611.09 576.1L611.21 598.2L611.34 577.2L611.46 583.1L611.59 580.2L611.71 584.4L611.84 588.7L611.96 592.9L612.09 574.1L612.21 584.4L612.34 601.7L612.46 594.6L612.59 614.4L612.71 578.6L612.84 576.9L612.96 596.8L613.09 572.8L613.21 600.3L613.34 582.1L613.46 583.1L613.59 584.6L613.71 573.8L613.84 569.6L613.96 558.0L614.09 572.9L614.22 586.9L614.34 573.2L614.47 575.0L614.59 553.2L614.72 577.4L614.84 584.4L614.97 584.0L615.09 575.0L615.22 587.4L615.34 543.3L615.47 583.1L615.59 584.0L615.72 586.0L615.84 584.7L615.97 579.8L616.09 580.8L616.22 579.9L616.34 587.8L616.47 576.4L616.59 599.5L616.72 571.5L616.84 585.5L616.97 587.7L617.09 572.5L617.22 591.6L617.34 603.1L617.47 566.4L617.59 582.9L617.72 569.9L617.84 576.8L617.97 572.0L618.09 580.7L618.22 578.4L618.34 568.4L618.47 584.7L618.59 588.0L618.72 580.2L618.84 597.4L618.97 573.4L619.09 571.3L619.22 561.6L619.34 583.9L619.47 580.8L619.59 588.9L619.72 581.9L619.84 579.6L619.97 570.3L620.09 584.1L620.22 582.2L620.34 575.8L620.47 560.5L620.59 569.2L620.72 572.3L620.84 577.2L620.97 564.1L621.09 589.6L621.22 565.0L621.34 564.7L621.47 577.9L621.59 574.3L621.72 563.9L621.84 582.0L621.97 588.3L622.09 585.6L622.22 567.4L622.34 590.6L622.47 565.8L622.59 576.9L622.72 587.0L622.84 569.9L622.97 565.7L623.09 560.5L623.22 567.8L623.34 573.6L623.47 556.0L623.59 576.9L623.72 555.1L623.84 569.0L623.97 587.5L624.09 590.1L624.22 582.1L624.35 549.0L624.47 575.1L624.60 564.9L624.72 574.6L624.85 565.9L624.97 592.8L625.10 564.6L625.22 590.9L625.35 589.0L625.47 570.6L625.60 578.8L625.72 573.4L625.85 563.1L625.97 576.0L626.10 565.2L626.22 570.4L626.35 554.7L626.47 548.2L626.60 575.9L626.72 574.4L626.85 573.4L626.97 551.4L627.10 582.0L627.22 564.6L627.35 562.6L627.47 554.7L627.60 559.8L627.72 588.5L627.85 561.3L627.97 556.6L628.10 572.5L628.22 564.1L628.35 563.1L628.47 565.2L628.60 557.6L628.72 570.8L628.85 547.9L628.97 569.3L629.10 570.6L629.22 576.0L629.35 570.3L629.47 571.4L629.60 565.1L629.72 563.8L629.85 556.4L629.97 567.7L630.10 556.3L630.22 555.3L630.35 552.0L630.47 571.2L630.60 563.9L630.72 562.5L630.85 554.5L630.97 555.4L631.10 560.4L631.22 565.2L631.35 556.5L631.47 547.5L631.60 570.9L631.72 566.0L631.85 548.0L631.97 554.3L632.10 552.2L632.22 561.3L632.35 550.1L632.47 571.0L632.60 562.0L632.72 535.3L632.85 567.4L632.97 553.7L633.10 564.9L633.22 557.0L633.35 558.7L633.47 561.2L633.60 559.0L633.72 536.5L633.85 545.9L633.97 562.6L634.10 547.6L634.23 551.5L634.35 548.5L634.48 554.1L634.60 539.8L634.73 575.3L634.85 536.9L634.98 536.1L635.10 558.6L635.23 549.8L635.35 550.0L635.48 530.1L635.60 556.8L635.73 526.1L635.85 551.9L635.98 552.6L636.10 539.6L636.23 540.6L636.35 551.1L636.48 536.1L636.60 560.8L636.73 551.9L636.85 548.1L636.98 548.9L637.10 548.5L637.23 549.9L637.35 565.2L637.48 539.5L637.60 559.3L637.73 547.1L637.85 541.7L637.98 542.5L638.10 542.1L638.23 531.0L638.35 557.6L638.48 552.6L638.60 517.3L638.73 523.3L638.85 522.8L638.98 528.9L639.10 544.2L639.23 533.1L639.35 519.4L639.48 536.9L639.60 545.5L639.73 538.5L639.85 539.1L639.98 543.6L640.10 558.8L640.23 574.9L640.35 561.9L640.48 566.3L640.60 534.6L640.73 538.3L640.85 552.4L640.98 546.7L641.10 556.2L641.23 552.4L641.35 564.7L641.48 546.0L641.60 562.9L641.73 549.9L641.85 545.0L641.98 556.4L642.10 569.0L642.23 547.3L642.35 576.1L642.48 539.1L642.60 543.0L642.73 541.4L642.85 569.9L642.98 567.5L643.10 563.9L643.23 551.5L643.35 573.7L643.48 571.7L643.60 580.8L643.73 580.1L643.85 580.2L643.98 572.1L644.11 578.0L644.23 558.3L644.36 577.6L644.48 574.8L644.61 562.4L644.73 570.6L644.86 570.5L644.98 579.6L645.11 550.0L645.23 561.4L645.36 546.3L645.48 552.0L645.61 565.8L645.73 561.1L645.86 581.4L645.98 570.7L646.11 573.9L646.23 582.0L646.36 565.5L646.48 565.2L646.61 555.6L646.73 588.5L646.86 571.7L646.98 579.8L647.11 573.3L647.23 554.3L647.36 577.7L647.48 572.2L647.61 577.4L647.73 564.4L647.86 575.6L647.98 567.8L648.11 565.7L648.23 559.0L648.36 563.2L648.48 555.5L648.61 582.0L648.73 576.5L648.86 576.5L648.98 579.9L649.11 567.7L649.23 575.5L649.36 585.1L649.48 556.4L649.61 547.3L649.73 556.2L649.86 572.9L649.98 566.3L650.11 575.4L650.23 568.3L650.36 565.6L650.48 569.2L650.61 574.6L650.73 565.0L650.86 537.3L650.98 573.1L651.11 571.2L651.23 574.4L651.36 563.2L651.48 568.7L651.61 560.0L651.73 584.9L651.86 552.6L651.98 565.9L652.11 576.1L652.23 567.4L652.36 586.9L652.48 571.9L652.61 556.4L652.73 553.7L652.86 583.1L652.98 562.6L653.11 567.2L653.23 572.8L653.36 577.5L653.48 585.2L653.61 563.6L653.73 586.5L653.86 570.4L653.98 556.2L654.11 560.2L654.24 589.1L654.36 576.5L654.49 584.0L654.61 549.7L654.74 575.9L654.86 565.0L654.99 566.1L655.11 573.3L655.24 570.2L655.36 576.8L655.49 562.4L655.61 558.4L655.74 574.3L655.86 567.7L655.99 564.5L656.11 570.7L656.24 542.5L656.36 551.7L656.49 557.8L656.61 552.9L656.74 566.5L656.86 559.3L656.99 558.9L657.11 555.3L657.24 558.4L657.36 557.6L657.49 567.3L657.61 566.3L657.74 564.6L657.86 538.8L657.99 567.7L658.11 568.3L658.24 567.8L658.36 565.9L658.49 547.1L658.61 558.6L658.74 544.9L658.86 570.0L658.99 552.6L659.11 558.2L659.24 540.6L659.36 535.0L659.49 540.6L659.61 552.8L659.74 552.7L659.86 551.7L659.99 563.0L660.11 549.1L660.24 548.7L660.36 549.9L660.49 549.7L660.61 553.0L660.74 546.5L660.86 525.5L660.99 565.4L661.11 556.7L661.24 545.9L661.36 530.6L661.49 539.3L661.61 531.8L661.74 554.4L661.86 543.3L661.99 558.5L662.11 539.3L662.24 545.1L662.36 546.6L662.49 539.5L662.61 523.9L662.74 527.9L662.86 543.0L662.99 533.9L663.11 546.6L663.24 531.5L663.36 536.0L663.49 550.1L663.61 540.4L663.74 562.6L663.86 551.2L663.99 520.5L664.12 546.3L664.24 533.6L664.37 528.9L664.49 520.9L664.62 513.5L664.74 516.0L664.87 517.7L664.99 526.7L665.12 494.9L665.24 520.1L665.37 539.8L665.49 531.0L665.62 535.2L665.74 518.0L665.87 538.4L665.99 520.4L666.12 534.2L666.24 514.6L666.37 543.2L666.49 500.7L666.62 502.6L666.74 491.7L666.87 530.3L666.99 506.3L667.12 518.1L667.24 513.0L667.37 528.1L667.49 528.3L667.62 515.9L667.74 509.9L667.87 513.0L667.99 497.7L668.12 507.4L668.24 502.5L668.37 517.5L668.49 518.8L668.62 498.2L668.74 514.3L668.87 519.4L668.99 532.5L669.12 504.3L669.24 522.6L669.37 508.5L669.49 510.1L669.62 542.6L669.74 492.1L669.87 507.9L669.99 520.7L670.12 524.3L670.24 511.7L670.37 516.4L670.49 510.6L670.62 508.4L670.74 508.2L670.87 534.5L670.99 510.1L671.12 514.5L671.24 499.8L671.37 509.7L671.49 517.9L671.62 516.7L671.74 530.2L671.87 517.1L671.99 511.4L672.12 521.7L672.24 513.4L672.37 519.5L672.49 515.3L672.62 517.2L672.74 508.2L672.87 490.9L672.99 504.9L673.12 521.3L673.24 507.1L673.37 546.4L673.49 533.4L673.62 508.9L673.74 531.9L673.87 528.9L673.99 527.1L674.12 505.9L674.25 519.5L674.37 516.4L674.50 516.1L674.62 507.7L674.75 555.4L674.87 526.3L675.00 514.5L675.12 506.4L675.25 526.5L675.37 531.1L675.50 522.2L675.62 485.1L675.75 521.1L675.87 502.3L676.00 515.1L676.12 496.2L676.25 507.3L676.37 516.5L676.50 501.0L676.62 499.8L676.75 504.0L676.87 488.5L677.00 518.6L677.12 510.4L677.25 516.4L677.37 504.4L677.50 529.6L677.62 520.2L677.75 527.0L677.87 514.4L678.00 508.1L678.12 513.8L678.25 504.1L678.37 508.2L678.50 527.2L678.62 520.7L678.75 518.9L678.87 524.6L679.00 527.0L679.12 509.5L679.25 519.1L679.37 501.7L679.50 499.9L679.62 504.6L679.75 503.0L679.87 509.4L680.00 520.4L680.12 546.0L680.25 515.7L680.37 545.1L680.50 538.1L680.62 535.8L680.75 523.7L680.87 549.8L681.00 538.6L681.12 537.6L681.25 508.0L681.37 526.2L681.50 524.9L681.62 543.7L681.75 549.2L681.87 540.5L682.00 542.8L682.12 537.7L682.25 542.9L682.37 559.1L682.50 554.1L682.62 555.8L682.75 559.1L682.87 562.7L683.00 562.6L683.12 569.8L683.25 571.9L683.37 574.7L683.50 573.8L683.62 579.2L683.75 582.0L683.87 580.1L684.00 585.6 M397 448V500M390.5 449V490M394 470V519M232.8 455V490M670 512V595M488.2 500V559M511 457V500M549 461V500M598.3 585V615M459 472V505M639 513V545" fill="none" stroke="#000" stroke-width="1" stroke-linejoin="bevel"/>
<g stroke="#000" stroke-width="1" fill="none" shape-rendering="crispEdges">
<path d="M219.500 197.500H688.500V376.500H219.500Z"/>
<path d="M214 202.5H219"/>
<path d="M214 212.5H219"/>
<path d="M214 225.5H219"/>
<path d="M214 243.5H219"/>
<path d="M214 278.5H219"/>
<path d="M214 283.5H219"/>
<path d="M214 289.5H219"/>
<path d="M214 296.5H219"/>
<path d="M214 304.5H219"/>
<path d="M214 314.5H219"/>
<path d="M214 326.5H219"/>
<path d="M214 344.5H219"/>
<path d="M208 273.5H219"/>
<path d="M208 375.5H219"/>
<path d="M220.5 376.5V382.5"/>
<path d="M238.5 376.5V388.5"/>
<path d="M256.5 376.5V382.5"/>
<path d="M274.5 376.5V382.5"/>
<path d="M292.5 376.5V382.5"/>
<path d="M310.5 376.5V382.5"/>
<path d="M328.5 376.5V382.5"/>
<path d="M346.5 376.5V382.5"/>
<path d="M364.5 376.5V382.5"/>
<path d="M382.5 376.5V382.5"/>
<path d="M400.5 376.5V382.5"/>
<path d="M418.5 376.5V382.5"/>
<path d="M436.5 376.5V382.5"/>
<path d="M454.5 376.5V388.5"/>
<path d="M472.5 376.5V382.5"/>
<path d="M490.5 376.5V382.5"/>
<path d="M508.5 376.5V382.5"/>
<path d="M526.5 376.5V382.5"/>
<path d="M544.5 376.5V382.5"/>
<path d="M562.5 376.5V382.5"/>
<path d="M580.5 376.5V382.5"/>
<path d="M598.5 376.5V382.5"/>
<path d="M616.5 376.5V382.5"/>
<path d="M634.5 376.5V382.5"/>
<path d="M652.5 376.5V382.5"/>
<path d="M670.5 376.5V388.5"/>
<path d="M688.5 376.5V382.5"/>
<path d="M220.5 621.5V627.5"/>
<path d="M238.5 621.5V633.5"/>
<path d="M256.5 621.5V627.5"/>
<path d="M274.5 621.5V627.5"/>
<path d="M292.5 621.5V627.5"/>
<path d="M310.5 621.5V627.5"/>
<path d="M328.5 621.5V627.5"/>
<path d="M346.5 621.5V627.5"/>
<path d="M364.5 621.5V627.5"/>
<path d="M382.5 621.5V627.5"/>
<path d="M400.5 621.5V627.5"/>
<path d="M418.5 621.5V627.5"/>
<path d="M436.5 621.5V627.5"/>
<path d="M454.5 621.5V633.5"/>
<path d="M472.5 621.5V627.5"/>
<path d="M490.5 621.5V627.5"/>
<path d="M508.5 621.5V627.5"/>
<path d="M526.5 621.5V627.5"/>
<path d="M544.5 621.5V627.5"/>
<path d="M562.5 621.5V627.5"/>
<path d="M580.5 621.5V627.5"/>
<path d="M598.5 621.5V627.5"/>
<path d="M616.5 621.5V627.5"/>
<path d="M634.5 621.5V627.5"/>
<path d="M652.5 621.5V627.5"/>
<path d="M670.5 621.5V633.5"/>
<path d="M688.5 621.5V627.5"/>
<path d="M219.500 440.500H688.500V621.500H219.500Z"/>
<path d="M208 451.5H219"/>
<path d="M208 475.5H219"/>
<path d="M208 500.5H219"/>
<path d="M208 529.5H219"/>
<path d="M208 562.5H219"/>
<path d="M208 599.5H219"/>
<path d="M214 440.5H219"/>
<path d="M214 463.5H219"/>
<path d="M214 487.5H219"/>
<path d="M214 514.5H219"/>
<path d="M214 545.5H219"/>
<path d="M214 580.5H219"/>
<path d="M214 621.5H219"/>
<path d="M720.500 197.500V377.500"/>
<path d="M721 377.5H732"/>
<path d="M721 364.5H726"/>
<path d="M721 350.5H732"/>
<path d="M721 337.5H726"/>
<path d="M721 324.5H732"/>
<path d="M721 310.5H726"/>
<path d="M721 297.5H732"/>
<path d="M721 283.5H726"/>
<path d="M721 270.5H732"/>
<path d="M721 257.5H726"/>
<path d="M721 243.5H732"/>
<path d="M721 230.5H726"/>
<path d="M721 217.5H732"/>
<path d="M721 203.5H726"/>
</g>
<g fill="#000" letter-spacing="-0.15" stroke="#fff" stroke-width="0.2">
<text x="454" y="187" font-size="16" font-family="Liberation Sans, sans-serif" text-anchor="middle" letter-spacing="0.18">RBSP-A/EMFISIS&#160;&#160;HFR Spectra Data</text>
<text x="193.5" y="283" font-size="16" font-family="DejaVu Sans, sans-serif" text-anchor="end" >10</text>
<text x="194" y="275" font-size="16" font-family="DejaVu Sans, sans-serif" text-anchor="start" >5</text>
<text x="193.5" y="385" font-size="16" font-family="DejaVu Sans, sans-serif" text-anchor="end" >10</text>
<text x="194" y="377" font-size="16" font-family="DejaVu Sans, sans-serif" text-anchor="start" >4</text>
<text transform="translate(161,287) rotate(-90)" font-size="16" font-family="DejaVu Sans, sans-serif" text-anchor="middle">Hz</text>
<text x="216" y="409" font-size="16" font-family="DejaVu Sans, sans-serif" text-anchor="start" >00:00</text>
<text x="216" y="425" font-size="16" font-family="DejaVu Sans, sans-serif" text-anchor="start" >2012-12-02</text>
<text x="648" y="409" font-size="16" font-family="DejaVu Sans, sans-serif" text-anchor="start" >00:00</text>
<text x="648" y="425" font-size="16" font-family="DejaVu Sans, sans-serif" text-anchor="start" >2012-12-03</text>
<text x="295.5" y="414" font-size="16" font-family="Liberation Sans, sans-serif" text-anchor="start" letter-spacing="0.13">RBSP-A/HOPE Electron 30 eV+ Tperp/Tpar</text>
<text x="737" y="387" font-size="16" font-family="DejaVu Sans, sans-serif" text-anchor="start" >10</text>
<text x="757" y="379" font-size="16" font-family="DejaVu Sans, sans-serif" text-anchor="start" >-22</text>
<text x="737" y="360" font-size="16" font-family="DejaVu Sans, sans-serif" text-anchor="start" >10</text>
<text x="757" y="352" font-size="16" font-family="DejaVu Sans, sans-serif" text-anchor="start" >-20</text>
<text x="737" y="334" font-size="16" font-family="DejaVu Sans, sans-serif" text-anchor="start" >10</text>
<text x="757" y="326" font-size="16" font-family="DejaVu Sans, sans-serif" text-anchor="start" >-18</text>
<text x="737" y="307" font-size="16" font-family="DejaVu Sans, sans-serif" text-anchor="start" >10</text>
<text x="757" y="299" font-size="16" font-family="DejaVu Sans, sans-serif" text-anchor="start" >-16</text>
<text x="737" y="280" font-size="16" font-family="DejaVu Sans, sans-serif" text-anchor="start" >10</text>
<text x="757" y="272" font-size="16" font-family="DejaVu Sans, sans-serif" text-anchor="start" >-14</text>
<text x="737" y="253" font-size="16" font-family="DejaVu Sans, sans-serif" text-anchor="start" >10</text>
<text x="757" y="245" font-size="16" font-family="DejaVu Sans, sans-serif" text-anchor="start" >-12</text>
<text x="737" y="227" font-size="16" font-family="DejaVu Sans, sans-serif" text-anchor="start" >10</text>
<text x="757" y="219" font-size="16" font-family="DejaVu Sans, sans-serif" text-anchor="start" >-10</text>
<text transform="translate(804.500,288) rotate(-90)" font-size="16" font-family="DejaVu Sans, sans-serif" text-anchor="middle">V^2/m^2/Hz</text>
<text x="202" y="457" font-size="16" font-family="DejaVu Sans, sans-serif" text-anchor="end" >2.2</text>
<text x="202" y="481" font-size="16" font-family="DejaVu Sans, sans-serif" text-anchor="end" >2.0</text>
<text x="202" y="506" font-size="16" font-family="DejaVu Sans, sans-serif" text-anchor="end" >1.8</text>
<text x="202" y="535" font-size="16" font-family="DejaVu Sans, sans-serif" text-anchor="end" >1.6</text>
<text x="202" y="568" font-size="16" font-family="DejaVu Sans, sans-serif" text-anchor="end" >1.4</text>
<text x="202" y="605" font-size="16" font-family="DejaVu Sans, sans-serif" text-anchor="end" >1.2</text>
<text transform="translate(166,531.600) rotate(-90)" font-size="16" font-family="Liberation Sans, sans-serif" text-anchor="middle" letter-spacing="0.4">e Tperp/Tpar</text>
<text x="261" y="653" font-size="16" font-family="DejaVu Sans, sans-serif" text-anchor="end" >00:00</text>
<text x="477" y="653" font-size="16" font-family="DejaVu Sans, sans-serif" text-anchor="end" >12:00</text>
<text x="693" y="653" font-size="16" font-family="DejaVu Sans, sans-serif" text-anchor="end" >00:00</text>
<text x="261" y="673" font-size="16" font-family="DejaVu Sans, sans-serif" text-anchor="end" >4.225</text>
<text x="477" y="673" font-size="16" font-family="DejaVu Sans, sans-serif" text-anchor="end" >5.756</text>
<text x="693" y="673" font-size="16" font-family="DejaVu Sans, sans-serif" text-anchor="end" >3.179</text>
<text x="261" y="693" font-size="16" font-family="DejaVu Sans, sans-serif" text-anchor="end" >-10.580</text>
<text x="477" y="693" font-size="16" font-family="DejaVu Sans, sans-serif" text-anchor="end" >-1.544</text>
<text x="693" y="693" font-size="16" font-family="DejaVu Sans, sans-serif" text-anchor="end" >-16.190</text>
<text x="261" y="713" font-size="16" font-family="DejaVu Sans, sans-serif" text-anchor="end" >2.247</text>
<text x="477" y="713" font-size="16" font-family="DejaVu Sans, sans-serif" text-anchor="end" >5.398</text>
<text x="693" y="713" font-size="16" font-family="DejaVu Sans, sans-serif" text-anchor="end" >8.125</text>
<text x="261" y="733" font-size="16" font-family="DejaVu Sans, sans-serif" text-anchor="end" >4.373</text>
<text x="477" y="733" font-size="16" font-family="DejaVu Sans, sans-serif" text-anchor="end" >5.760</text>
<text x="693" y="733" font-size="16" font-family="DejaVu Sans, sans-serif" text-anchor="end" >3.447</text>
<text x="168" y="673" font-size="16" font-family="DejaVu Sans, sans-serif" text-anchor="end" >R</text>
<text x="168" y="678" font-size="10" font-family="DejaVu Sans, sans-serif" text-anchor="start" stroke="none">E</text>
<text x="174.5" y="693" font-size="16" font-family="DejaVu Sans, sans-serif" text-anchor="end" letter-spacing="-0.35">MLat</text>
<text x="174.5" y="713" font-size="16" font-family="DejaVu Sans, sans-serif" text-anchor="end" letter-spacing="-0.35">MLT</text>
<text x="174.5" y="733" font-size="16" font-family="DejaVu Sans, sans-serif" text-anchor="end" >L</text>
<text x="252.5" y="757" font-size="16" font-family="DejaVu Sans, sans-serif" text-anchor="start" letter-spacing="-0.15">2012-12-01 (336) 23:00 to 2012-12-03 (338) 01:00</text>
</g>
</svg>

<!-- progress monitor -->
<div class="abs" style="left:347px;top:359px;width:245px;height:89px;box-sizing:border-box;border:1px solid #a4a4a4;border-radius:5px 5px 0 0;background:#e4e4e4"></div>
<div class="abs" style="left:348px;top:360px;width:243px;height:24px;border-radius:4px 4px 0 0;background:linear-gradient(#e6e6e6,#dadada 60%,#d0d0d0)"></div>
<svg class="abs" style="left:356px;top:365px" width="16" height="12"><path d="M3.500 4.500h9l-4.500 5z" fill="#a2a2a2"/></svg>
<div class="abs" style="left:411px;top:365px;width:115px;text-align:center;font-family:'DejaVu Sans Condensed','DejaVu Sans',sans-serif;font-weight:bold;font-size:13px;line-height:16px;color:#747474;white-space:nowrap">Progress Monitor</div>
<svg class="abs" style="left:565px;top:365px" width="16" height="16" stroke="#a0a0a0" stroke-width="2" fill="none"><path d="M4.500 4.500l7 7M11.500 4.500l-7 7"/></svg>
<div class="abs" style="left:349px;top:384px;width:240px;height:62px;background:#fdfdfd"></div>
<div class="abs" style="left:349px;top:384px;width:240px;text-align:center;font-weight:bold;font-size:14px;line-height:17px;color:#2b2226;white-space:nowrap">running batch</div>
<div class="abs" style="left:350px;top:402px;width:240px;text-align:center;font-weight:bold;font-size:8.200px;line-height:10px;color:#2b2226;white-space:nowrap;letter-spacing:0.12px">write /hom...walk3/product_20121230_12.png</div>
<div class="abs" style="left:349px;top:411px;width:220px;height:20px;box-sizing:border-box;border:1px solid #70859a;background:#eeeeee"></div>
<div class="abs" style="left:350px;top:412px;width:209px;height:18px;box-sizing:border-box;background:#a3b8cc;border-top:1px solid #5b7fc0;border-left:1px solid #5b7fc0"></div>
<div class="abs" style="left:569px;top:411px;width:20px;height:20px;box-sizing:border-box;border:1px solid #70859a;background:linear-gradient(#f2f7fd,#e0ecf8 45%,#c4daf0)"></div>
<div class="abs" style="left:572px;top:414px;width:14px;height:14px;box-sizing:border-box;border:1px solid #e04444;border-bottom-color:#ee6a30;border-radius:3.500px;background:linear-gradient(#f6c4ca,#f08c98 40%,#f04a5c 60%,#f03c50)"><svg width="12" height="12" style="display:block" stroke="#f4faf8" stroke-width="2.300" stroke-linecap="round" fill="none"><path d="M3.700 3.700l4.600 4.600M8.300 3.700l-4.600 4.600"/></svg></div>
<div class="abs" style="left:349px;top:432px;width:240px;text-align:center;font-weight:bold;font-size:12px;line-height:14px;color:#2b2226;white-space:nowrap;letter-spacing:-0.05px">60/62 (41.2/min, eta 4.4 s)</div>

</body>
</html>
